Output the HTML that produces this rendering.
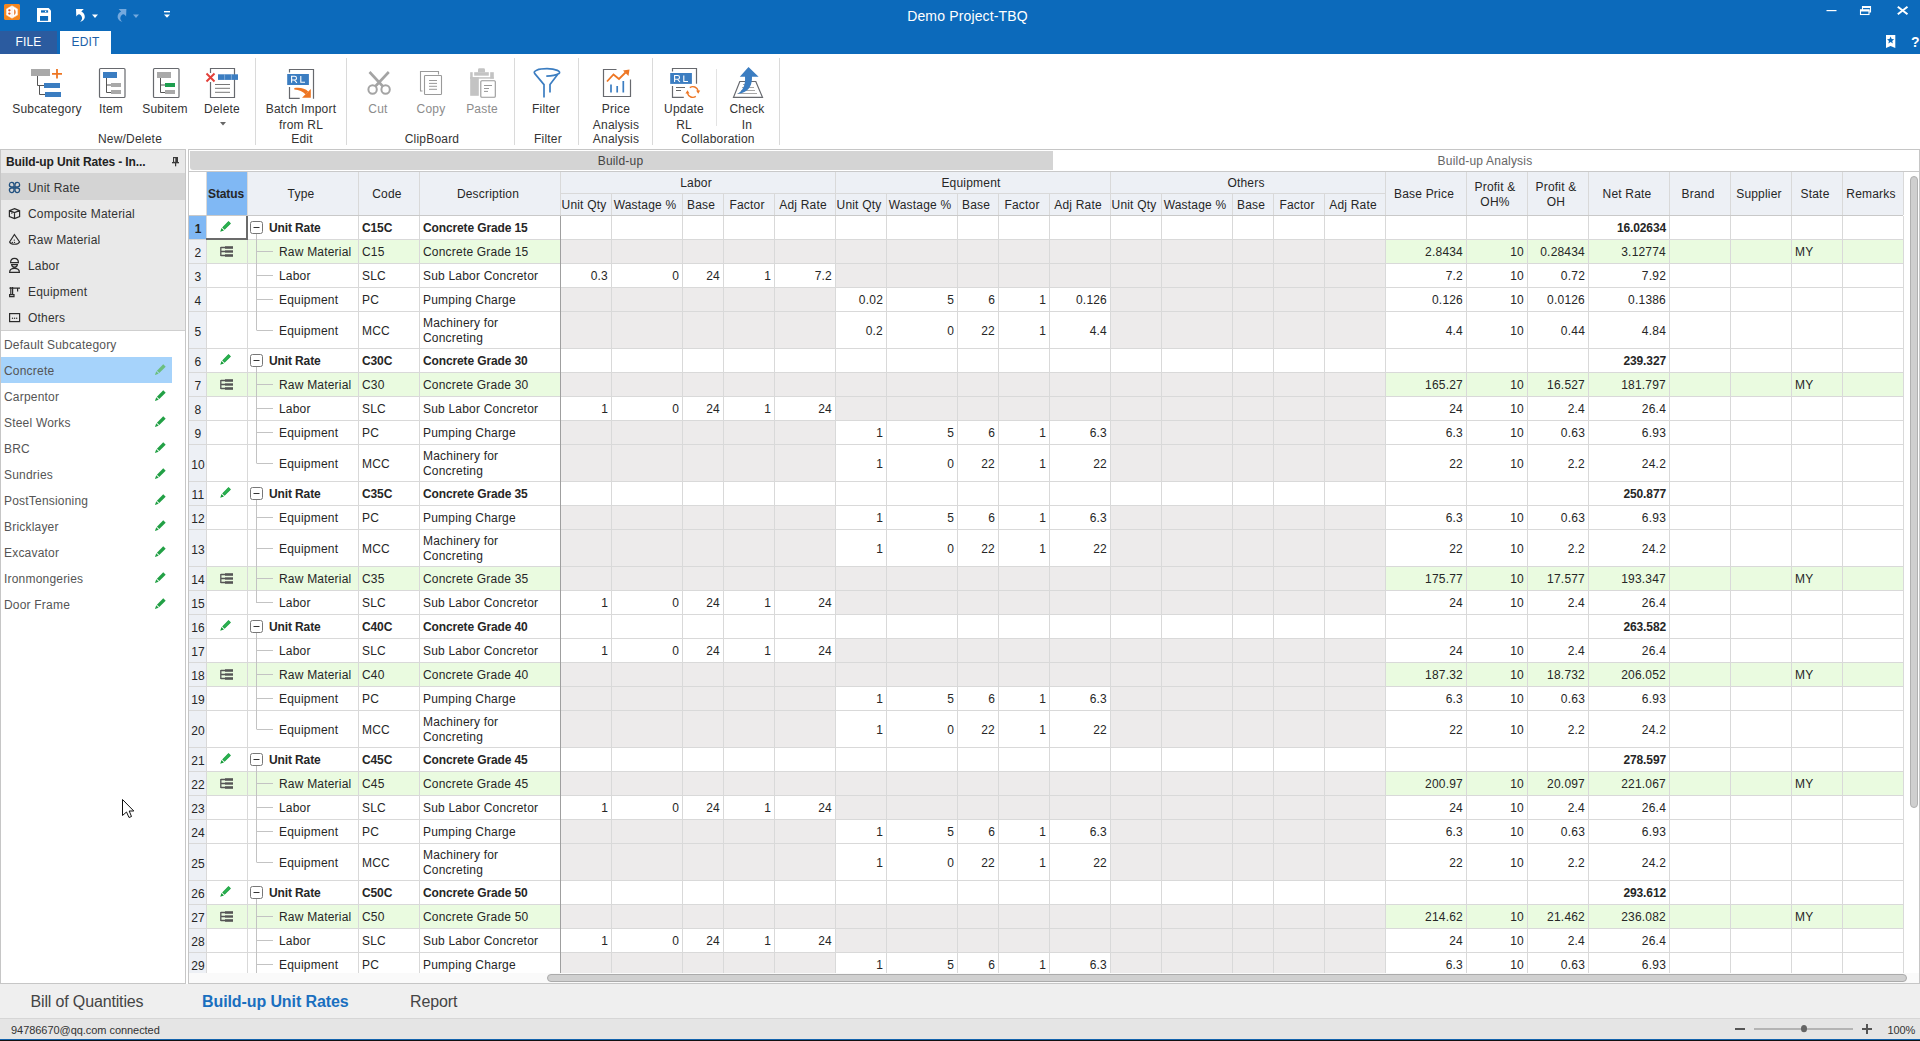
<!DOCTYPE html><html><head><meta charset="utf-8"><title>Demo Project-TBQ</title><style>
*{margin:0;padding:0;box-sizing:border-box}
html,body{width:1920px;height:1041px;overflow:hidden;background:#fff;font-family:"Liberation Sans",sans-serif;font-size:12px;color:#262626;letter-spacing:0.2px}
.a{position:absolute}
.t{position:absolute;white-space:nowrap;line-height:14px}
svg{position:absolute;overflow:visible}
.rl{position:absolute;white-space:nowrap;line-height:14px;text-align:center;color:#333;width:120px}
.rd{color:#8c8c8c}
.sep{position:absolute;width:1px;background:#dadada}
</style></head><body>
<div class="a" style="left:0;top:0;width:1920px;height:54px;background:#0c6abb"></div>
<div class="t" style="left:0;top:8px;width:1935px;text-align:center;color:#fff;font-size:14px;line-height:16px;letter-spacing:0.15px">Demo Project-TBQ</div>
<svg style="left:0;top:0" width="24" height="24"><path d="M5 4 H19 L20 5 V19 L19 20 H5 L4 19 V5 Z" fill="#f5861f"/><path d="M12 5.8 L17.6 9 V15 L12 18.2 L6.4 15 V9 Z" fill="#fff" stroke="#fde6cf" stroke-width="0.6"/><ellipse cx="9.4" cy="10.3" rx="1.2" ry="1.1" fill="#e8531a"/><ellipse cx="9.4" cy="13.6" rx="1.2" ry="1.1" fill="#e8531a"/><path d="M14.2 9.2 C16 10 16.2 14 14.2 14.9 Z" fill="#ea6f1c"/><path d="M12 6.5 V17.5" stroke="#fbe3d6" stroke-width="0.8"/></svg>
<svg style="left:0;top:0" width="60" height="30"><path d="M37 8.1 H48.6 L51 10.5 V21.9 H37 Z" fill="#fff"/><rect x="40" y="16" width="8.1" height="4.8" fill="#0c6abb"/><rect x="41" y="10.3" width="7.1" height="2.3" fill="#0c6abb"/><rect x="45" y="10.8" width="1.2" height="1.3" fill="#fff"/></svg>
<svg style="left:0;top:0" width="200" height="30"><path d="M76 9.1 H83.8 L81.3 11.6 C83.5 12.8 85 14.8 84.8 17.2 C84.6 19.5 82.5 21.2 80 21.7 C81.8 20.3 82.4 18.8 82 17.5 C81.6 15.6 80.3 14.3 79 14.2 C78 14.2 77 15.2 76.3 16.6 Z" fill="#fff"/><path d="M92 14.5 H98 L95 18 Z" fill="#fff"/><path transform="translate(202.4 0) scale(-1 1)" d="M76 9.1 H83.8 L81.3 11.6 C83.5 12.8 85 14.8 84.8 17.2 C84.6 19.5 82.5 21.2 80 21.7 C81.8 20.3 82.4 18.8 82 17.5 C81.6 15.6 80.3 14.3 79 14.2 C78 14.2 77 15.2 76.3 16.6 Z" fill="#74a9de"/><path d="M133 14.5 H139 L136 18 Z" fill="#74a9de"/><rect x="164" y="11" width="6" height="1.4" fill="#fff"/><path d="M164 14.5 H170 L167 17.8 Z" fill="#fff"/></svg>
<svg style="left:0;top:0" width="1920" height="60"><rect x="1826.5" y="10" width="10" height="1.2" fill="#fff"/><path d="M1862.5 11.5 V6.5 H1870.5 V12 H1869" fill="none" stroke="#fff" stroke-width="1.1"/><rect x="1862" y="6" width="9" height="2" fill="#fff"/><rect x="1860.5" y="10" width="8.5" height="4.5" fill="#0c6abb" stroke="#fff" stroke-width="1.1"/><rect x="1860" y="9.5" width="9.5" height="2" fill="#fff"/><path d="M1897.8 6.8 L1907.5 14.3 M1907.5 6.8 L1897.8 14.3" stroke="#fff" stroke-width="2"/><path d="M1886 35 H1895.3 V48 L1890.6 46 L1886 48 Z" fill="#fff"/><path d="M1890.6 36.6 L1891.7 39.1 L1894.2 39.3 L1892.2 40.9 L1892.9 43.4 L1890.6 42 L1888.3 43.4 L1889 40.9 L1887 39.3 L1889.5 39.1 Z" fill="#0c6abb"/></svg>
<div class="t" style="left:1911px;top:35px;color:#fff;font-weight:bold;font-size:14px">?</div>
<div class="a" style="left:0;top:31px;width:57px;height:23px;background:#2b5b9f"></div>
<div class="t" style="left:0;top:35px;width:57px;text-align:center;color:#fff;font-size:12px">FILE</div>
<div class="a" style="left:60px;top:31px;width:51px;height:24px;background:#fff"></div>
<div class="t" style="left:60px;top:35px;width:51px;text-align:center;color:#1d5fa8;font-size:12px">EDIT</div>
<div class="a" style="left:0;top:54px;width:1920px;height:95px;background:#fff"></div>
<div class="rl " style="left:-13px;top:102px">Subcategory</div>
<div class="rl " style="left:51px;top:102px">Item</div>
<div class="rl " style="left:105px;top:102px">Subitem</div>
<div class="rl " style="left:162px;top:102px">Delete</div>
<div class="rl " style="left:70px;top:132px">New/Delete</div>
<div class="rl " style="left:241px;top:102px">Batch Import</div>
<div class="rl " style="left:241px;top:118px">from RL</div>
<div class="rl " style="left:242px;top:132px">Edit</div>
<div class="rl rd" style="left:318px;top:102px">Cut</div>
<div class="rl rd" style="left:371px;top:102px">Copy</div>
<div class="rl rd" style="left:422px;top:102px">Paste</div>
<div class="rl " style="left:372px;top:132px">ClipBoard</div>
<div class="rl " style="left:486px;top:102px">Filter</div>
<div class="rl " style="left:488px;top:132px">Filter</div>
<div class="rl " style="left:556px;top:102px">Price</div>
<div class="rl " style="left:556px;top:118px">Analysis</div>
<div class="rl " style="left:556px;top:132px">Analysis</div>
<div class="rl " style="left:624px;top:102px">Update</div>
<div class="rl " style="left:624px;top:118px">RL</div>
<div class="rl " style="left:687px;top:102px">Check</div>
<div class="rl " style="left:687px;top:118px">In</div>
<div class="rl " style="left:658px;top:132px">Collaboration</div>
<div class="sep" style="left:255px;top:58px;height:87px"></div>
<div class="sep" style="left:346px;top:58px;height:87px"></div>
<div class="sep" style="left:514px;top:58px;height:87px"></div>
<div class="sep" style="left:578px;top:58px;height:87px"></div>
<div class="sep" style="left:652px;top:58px;height:87px"></div>
<div class="sep" style="left:779px;top:58px;height:87px"></div>
<div class="sep" style="left:716px;top:69px;height:57px;background:#e3e3e3"></div>
<svg style="left:0;top:0" width="800" height="150"><g fill="none" stroke-linecap="butt"><rect x="31" y="69" width="19" height="7" fill="#a9a9a9"/><path d="M52 73.8 H62 M57 69 V78.5" stroke="#ee7623" stroke-width="1.8"/><path d="M37.5 76 V85.5 H44 M39.5 85.5 V94.5 H45" stroke="#555" stroke-width="1"/><rect x="44" y="83" width="16" height="5" fill="#3b7dc1"/><rect x="45" y="92" width="16" height="5" fill="#3b7dc1"/><rect x="99.5" y="68.5" width="25.5" height="29" rx="1" stroke="#67696e" stroke-width="1.2"/><rect x="103" y="72" width="14" height="6" fill="#3b7dc1"/><path d="M106.5 78 V92.5 H111 M106.5 85 H111" stroke="#555" stroke-width="1"/><rect x="111" y="83" width="10" height="4" fill="#a9a9a9"/><rect x="111" y="90" width="10" height="4" fill="#a9a9a9"/><rect x="153.5" y="68.5" width="25.5" height="29" rx="1" stroke="#67696e" stroke-width="1.2"/><rect x="157" y="72" width="14" height="6" fill="#a9a9a9"/><path d="M160.5 78 V92.5 H165 M160.5 85 H165" stroke="#555" stroke-width="1"/><rect x="165" y="83" width="10" height="4" fill="#1e9e4f"/><rect x="165" y="90" width="10" height="4" fill="#a9a9a9"/><path d="M210.5 73 V68.5 H234.5 V97.5 H210.5 V82" stroke="#67696e" stroke-width="1.2"/><path d="M206.5 73.5 L214.5 81.5 M214.5 73.5 L206.5 81.5" stroke="#e2403a" stroke-width="2"/><rect x="218" y="74.3" width="20" height="5.6" fill="#3b7dc1"/><path d="M224.6 74.3 V79.9 M231.4 74.3 V79.9" stroke="#a9c6e6" stroke-width="0.6"/><path d="M215 84.5 H230 M215 88.3 H230 M215 92.3 H230" stroke="#777" stroke-width="1"/><path d="M220 122 H226 L223 125.5 Z" fill="#666"/><path d="M289.5 72.5 V69.5 H313.5 V98.8 M289.5 87 V98.4 H299.7" stroke="#67696e" stroke-width="1.2"/><rect x="287.2" y="74" width="21.7" height="11" fill="#3b7dc1"/><path d="M291.6 82.8 V76.3 H294.6 Q296.5 76.3 296.5 78.2 Q296.5 80 294.6 80 H291.6 M294.4 80 L296.9 82.8 M300.8 76.1 V82.3 H305" stroke="#fff" stroke-width="1.1"/><path d="M294.3 88.1 C300 87.2 305 88.3 308.2 91.6 L305.6 94.4 C303 91.4 299 89.9 294.3 89.4 Z" fill="#ee7623"/><path d="M302 97.8 L310.8 89 L310.8 97.8 Z" fill="#ee7623"/><circle cx="372.6" cy="89.5" r="4.2" stroke="#a4a4a4" stroke-width="2"/><circle cx="385.6" cy="89.5" r="4.2" stroke="#a4a4a4" stroke-width="2"/><path d="M369.5 72 L383 86.5 M388.8 72 L375.2 86.5" stroke="#a4a4a4" stroke-width="2.6"/><path d="M422.5 91 H420.5 V71.5 H438.5 V74.5" stroke="#9a9a9a" stroke-width="1.1"/><rect x="424.5" y="75.5" width="17" height="19" rx="0.8" stroke="#9a9a9a" stroke-width="1.1"/><path d="M429 80.5 H437 M429 83.4 H437 M429 86.3 H437 M429 89.3 H437" stroke="#9a9a9a" stroke-width="1"/><g fill="#c3c3c3"><rect x="470.2" y="77.2" width="8.6" height="18.6"/><rect x="470.2" y="72.2" width="2.5" height="6.5"/><rect x="490.2" y="72.2" width="3.6" height="6.5"/><rect x="470.2" y="77.2" width="23.6" height="1.5"/><rect x="474.2" y="72.2" width="14.6" height="3.5"/><path d="M478 72.3 V69.5 Q478 68.2 479.5 68.2 H483.5 Q485 68.2 485 69.5 V72.3 Z"/></g><rect x="480.8" y="80.8" width="14.5" height="16.5" rx="1" fill="#fff" stroke="#989898" stroke-width="1.1"/><path d="M484 85.5 H492 M484 88.5 H489 M484 91.4 H488" stroke="#989898" stroke-width="1"/><path d="M546.3 76.2 C551 76 556 75.2 559 73.5 C561.5 71.5 556 68.7 547 68.7 C538 68.7 532.5 71 534.8 73.6 L544 84.6 V97.5 M557.8 74.3 L550 84.6 V92.5" stroke="#3b7dc1" stroke-width="1.7"/><path d="M616.5 69.5 H603.5 V96.5 H630.5 V79.5" stroke="#67696e" stroke-width="1.2"/><path d="M611 84.5 V92.6 M617.2 86 V92.6 M623.3 81 V92.6" stroke="#3b7dc1" stroke-width="1.7"/><path d="M607 81.5 L613.5 74.5 L619 79 L625.5 72.5" stroke="#ee7623" stroke-width="1.8"/><path d="M623 70.5 L629.5 69.5 L628.5 76 Z" fill="#ee7623"/><path d="M672.5 71.6 V68.5 H696.5 V83.7 M672.5 86 V97.4 H683.8" stroke="#67696e" stroke-width="1.2"/><rect x="670.2" y="73" width="21.7" height="10.9" fill="#3b7dc1"/><path d="M674.6 82 V75.5 H677.6 Q679.5 75.5 679.5 77.4 Q679.5 79.2 677.6 79.2 H674.6 M677.4 79.2 L679.9 82 M683.8 75.4 V81.5 H688" stroke="#fff" stroke-width="1.1"/><path d="M676 87.5 H685 M676 90.5 H681" stroke="#666" stroke-width="1"/><path d="M689.8 87.6 A5.5 5.5 0 0 1 698.2 90.8 M695.8 96.4 A5.5 5.5 0 0 1 687.4 93.2" stroke="#ee7623" stroke-width="1.4"/><path d="M696.1 90.4 L700.2 90.4 L698.2 93.8 Z M685.4 93.6 L689.5 93.6 L687.5 90.2 Z" fill="#ee7623"/><path d="M739.8 81.5 H755.8 L762.5 97.3 H733.5 Z" stroke="#67696e" stroke-width="1.2"/><path d="M743 84.5 H751 M742 87.5 H754 M741 90.5 H755 M737.5 93.5 H757" stroke="#9d9d9d" stroke-width="0.9"/><path d="M748.5 67 L758.6 76.8 H752 C752.3 86 748 93 737.8 93.8 C743.5 90.5 745.5 84 745 76.8 H739.8 Z" fill="#3b7dc1"/></g></svg>
<div class="a" style="left:0;top:149px;width:186px;height:835px;border:1px solid #c6c6c6;background:#fff"></div>
<div class="a" style="left:188px;top:149px;width:1732px;height:835px;border:1px solid #c6c6c6;border-right:none;background:#fff"></div>
<div class="a" style="left:186px;top:149px;width:2px;height:835px;background:#fff"></div>
<div class="a" style="left:1px;top:150px;width:184px;height:23px;background:#e9e9e9"></div>
<div class="t" style="left:6px;top:155px;font-weight:bold;letter-spacing:-0.12px;color:#222">Build-up Unit Rates - In...</div>
<svg style="left:0;top:0" width="186" height="180"><g fill="#3a3a3a"><rect x="173" y="157" width="5" height="5.3"/><rect x="172" y="162" width="7" height="1.3"/><rect x="175" y="163" width="1.2" height="3.3"/></g><rect x="174.1" y="158.2" width="1.2" height="3.6" fill="#f4f4f4"/></svg>
<div class="a" style="left:1px;top:173px;width:184px;height:157px;background:#e9e9e9"></div>
<div class="a" style="left:1px;top:173px;width:184px;height:27px;background:#d4d4d4"></div>
<div class="a" style="left:1px;top:330px;width:184px;height:1px;background:#cfcfcf"></div>
<div class="t" style="left:28px;top:181px;color:#333">Unit Rate</div>
<div class="t" style="left:28px;top:207px;color:#333">Composite Material</div>
<div class="t" style="left:28px;top:233px;color:#333">Raw Material</div>
<div class="t" style="left:28px;top:259px;color:#333">Labor</div>
<div class="t" style="left:28px;top:285px;color:#333">Equipment</div>
<div class="t" style="left:28px;top:311px;color:#333">Others</div>
<svg style="left:0;top:0" width="30" height="340"><g fill="none" stroke="#2b2b2b" stroke-width="1.2"><g stroke="#1f4f7e" stroke-width="1.3"><path d="M14 187 H11.3 A2.3 2.3 0 1 1 14 184.7 Z"/><path d="M15 187 H17.7 A2.3 2.3 0 1 0 15 184.7 Z"/><path d="M14 188 H11.3 A2.3 2.3 0 1 0 14 190.3 Z"/><path d="M15 188 H17.7 A2.3 2.3 0 1 1 15 190.3 Z"/></g><path d="M14.5 208.6 L19.6 210.6 V216.6 L14.5 218.6 L9.4 216.6 V210.6 Z M9.4 210.6 L14.5 212.6 L19.6 210.6 M14.5 212.6 V218.6 M11.2 213.2 H12.4"/><path d="M14.4 234.5 L9.6 242 C11 245 18 245 19.6 242 Z"/><g fill="#2b2b2b" stroke="none"><circle cx="14.3" cy="240.1" r="0.7"/><circle cx="12.3" cy="242.4" r="0.7"/><circle cx="14.5" cy="242.4" r="0.7"/></g><path d="M10.6 262.6 C10.6 257 18.4 257 18.4 262.6 Z M11.6 264.6 H17.4 C17 268 12 268 11.6 264.6 Z M9.6 272.4 C9.6 267 19.4 267 19.4 272.4 Z"/><path d="M10.8 287 V294.6 M12.6 287 V294.6 M9.6 294.6 H14 V296.6 H9.6 Z M9.4 288.2 H20 M17.6 288.2 V291.6" /><rect x="9.6" y="313.6" width="10" height="8"/><g fill="#2b2b2b" stroke="none"><circle cx="12.5" cy="318.3" r="0.7"/><circle cx="14.6" cy="318.3" r="0.7"/><circle cx="16.7" cy="318.3" r="0.7"/></g></g></svg>
<div class="t" style="left:4px;top:338px;color:#555">Default Subcategory</div>
<div class="a" style="left:1px;top:357px;width:171px;height:26px;background:#a6d3fb"></div>
<div class="t" style="left:4px;top:364px;color:#555">Concrete</div>
<div class="t" style="left:4px;top:390px;color:#555">Carpentor</div>
<div class="t" style="left:4px;top:416px;color:#555">Steel Works</div>
<div class="t" style="left:4px;top:442px;color:#555">BRC</div>
<div class="t" style="left:4px;top:468px;color:#555">Sundries</div>
<div class="t" style="left:4px;top:494px;color:#555">PostTensioning</div>
<div class="t" style="left:4px;top:520px;color:#555">Bricklayer</div>
<div class="t" style="left:4px;top:546px;color:#555">Excavator</div>
<div class="t" style="left:4px;top:572px;color:#555">Ironmongeries</div>
<div class="t" style="left:4px;top:598px;color:#555">Door Frame</div>
<svg style="left:0;top:0" width="186" height="620"><g transform="translate(160.5 369.5) rotate(-45)"><rect x="-3.4" y="-1.7" width="9" height="3.4" fill="#6bbf7e"/><path d="M-4.3 -1.7 L-7.9 0 L-4.3 1.7 Z" fill="#6bbf7e"/></g><g transform="translate(160.5 395.5) rotate(-45)"><rect x="-3.4" y="-1.7" width="9" height="3.4" fill="#22a045"/><path d="M-4.3 -1.7 L-7.9 0 L-4.3 1.7 Z" fill="#22a045"/></g><g transform="translate(160.5 421.5) rotate(-45)"><rect x="-3.4" y="-1.7" width="9" height="3.4" fill="#22a045"/><path d="M-4.3 -1.7 L-7.9 0 L-4.3 1.7 Z" fill="#22a045"/></g><g transform="translate(160.5 447.5) rotate(-45)"><rect x="-3.4" y="-1.7" width="9" height="3.4" fill="#22a045"/><path d="M-4.3 -1.7 L-7.9 0 L-4.3 1.7 Z" fill="#22a045"/></g><g transform="translate(160.5 473.5) rotate(-45)"><rect x="-3.4" y="-1.7" width="9" height="3.4" fill="#22a045"/><path d="M-4.3 -1.7 L-7.9 0 L-4.3 1.7 Z" fill="#22a045"/></g><g transform="translate(160.5 499.5) rotate(-45)"><rect x="-3.4" y="-1.7" width="9" height="3.4" fill="#22a045"/><path d="M-4.3 -1.7 L-7.9 0 L-4.3 1.7 Z" fill="#22a045"/></g><g transform="translate(160.5 525.5) rotate(-45)"><rect x="-3.4" y="-1.7" width="9" height="3.4" fill="#22a045"/><path d="M-4.3 -1.7 L-7.9 0 L-4.3 1.7 Z" fill="#22a045"/></g><g transform="translate(160.5 551.5) rotate(-45)"><rect x="-3.4" y="-1.7" width="9" height="3.4" fill="#22a045"/><path d="M-4.3 -1.7 L-7.9 0 L-4.3 1.7 Z" fill="#22a045"/></g><g transform="translate(160.5 577.5) rotate(-45)"><rect x="-3.4" y="-1.7" width="9" height="3.4" fill="#22a045"/><path d="M-4.3 -1.7 L-7.9 0 L-4.3 1.7 Z" fill="#22a045"/></g><g transform="translate(160.5 603.5) rotate(-45)"><rect x="-3.4" y="-1.7" width="9" height="3.4" fill="#22a045"/><path d="M-4.3 -1.7 L-7.9 0 L-4.3 1.7 Z" fill="#22a045"/></g></svg>
<div class="a" style="left:190px;top:151px;width:863px;height:19px;background:#d4d4d4;border-radius:0 0 0 3px"></div>
<div class="t" style="left:189px;top:154px;width:863px;text-align:center;color:#444">Build-up</div>
<div class="t" style="left:1052px;top:154px;width:866px;text-align:center;color:#666">Build-up Analysis</div>
<div class="a" style="left:189px;top:171px;width:1730px;height:1px;background:#c9c9c9"></div>
<div class="a" style="left:189px;top:172px;width:17px;height:43px;background:#fff"></div>
<div class="a" style="left:207px;top:172px;width:40px;height:43px;background:#80b8f4"></div>
<div class="t" style="left:206px;top:186.5px;width:40px;text-align:center;font-weight:bold;letter-spacing:-0.12px">Status</div>
<div class="a" style="left:247px;top:172px;width:1px;height:43px;background:#80b8f4"></div>
<div class="a" style="left:248px;top:172px;width:110px;height:43px;background:#edf0f5"></div>
<div class="t" style="left:246px;top:186.5px;width:110px;text-align:center">Type</div>
<div class="a" style="left:359px;top:172px;width:60px;height:43px;background:#edf0f5"></div>
<div class="t" style="left:357px;top:186.5px;width:60px;text-align:center">Code</div>
<div class="a" style="left:420px;top:172px;width:140px;height:43px;background:#edf0f5"></div>
<div class="t" style="left:418px;top:186.5px;width:140px;text-align:center">Description</div>
<div class="a" style="left:561px;top:172px;width:274px;height:21px;background:#edf0f5"></div>
<div class="t" style="left:559px;top:176px;width:274px;text-align:center">Labor</div>
<div class="a" style="left:561px;top:193px;width:275px;height:1px;background:#d9d9d9"></div>
<div class="a" style="left:561px;top:194px;width:50px;height:21px;background:#edf0f5"></div>
<div class="t" style="left:559px;top:197.5px;width:50px;text-align:center">Unit Qty</div>
<div class="a" style="left:611px;top:194px;width:1px;height:21px;background:#d9d9d9"></div>
<div class="a" style="left:612px;top:194px;width:70px;height:21px;background:#edf0f5"></div>
<div class="t" style="left:610px;top:197.5px;width:70px;text-align:center">Wastage %</div>
<div class="a" style="left:682px;top:194px;width:1px;height:21px;background:#d9d9d9"></div>
<div class="a" style="left:683px;top:194px;width:40px;height:21px;background:#edf0f5"></div>
<div class="t" style="left:681px;top:197.5px;width:40px;text-align:center">Base</div>
<div class="a" style="left:723px;top:194px;width:1px;height:21px;background:#d9d9d9"></div>
<div class="a" style="left:724px;top:194px;width:50px;height:21px;background:#edf0f5"></div>
<div class="t" style="left:722px;top:197.5px;width:50px;text-align:center">Factor</div>
<div class="a" style="left:774px;top:194px;width:1px;height:21px;background:#d9d9d9"></div>
<div class="a" style="left:775px;top:194px;width:60px;height:21px;background:#edf0f5"></div>
<div class="t" style="left:773px;top:197.5px;width:60px;text-align:center">Adj Rate</div>
<div class="a" style="left:835px;top:194px;width:1px;height:21px;background:#d9d9d9"></div>
<div class="a" style="left:835px;top:172px;width:1px;height:21px;background:#d9d9d9"></div>
<div class="a" style="left:836px;top:172px;width:274px;height:21px;background:#edf0f5"></div>
<div class="t" style="left:834px;top:176px;width:274px;text-align:center">Equipment</div>
<div class="a" style="left:836px;top:193px;width:275px;height:1px;background:#d9d9d9"></div>
<div class="a" style="left:836px;top:194px;width:50px;height:21px;background:#edf0f5"></div>
<div class="t" style="left:834px;top:197.5px;width:50px;text-align:center">Unit Qty</div>
<div class="a" style="left:886px;top:194px;width:1px;height:21px;background:#d9d9d9"></div>
<div class="a" style="left:887px;top:194px;width:70px;height:21px;background:#edf0f5"></div>
<div class="t" style="left:885px;top:197.5px;width:70px;text-align:center">Wastage %</div>
<div class="a" style="left:957px;top:194px;width:1px;height:21px;background:#d9d9d9"></div>
<div class="a" style="left:958px;top:194px;width:40px;height:21px;background:#edf0f5"></div>
<div class="t" style="left:956px;top:197.5px;width:40px;text-align:center">Base</div>
<div class="a" style="left:998px;top:194px;width:1px;height:21px;background:#d9d9d9"></div>
<div class="a" style="left:999px;top:194px;width:50px;height:21px;background:#edf0f5"></div>
<div class="t" style="left:997px;top:197.5px;width:50px;text-align:center">Factor</div>
<div class="a" style="left:1049px;top:194px;width:1px;height:21px;background:#d9d9d9"></div>
<div class="a" style="left:1050px;top:194px;width:60px;height:21px;background:#edf0f5"></div>
<div class="t" style="left:1048px;top:197.5px;width:60px;text-align:center">Adj Rate</div>
<div class="a" style="left:1110px;top:194px;width:1px;height:21px;background:#d9d9d9"></div>
<div class="a" style="left:1110px;top:172px;width:1px;height:21px;background:#d9d9d9"></div>
<div class="a" style="left:1111px;top:172px;width:274px;height:21px;background:#edf0f5"></div>
<div class="t" style="left:1109px;top:176px;width:274px;text-align:center">Others</div>
<div class="a" style="left:1111px;top:193px;width:275px;height:1px;background:#d9d9d9"></div>
<div class="a" style="left:1111px;top:194px;width:50px;height:21px;background:#edf0f5"></div>
<div class="t" style="left:1109px;top:197.5px;width:50px;text-align:center">Unit Qty</div>
<div class="a" style="left:1161px;top:194px;width:1px;height:21px;background:#d9d9d9"></div>
<div class="a" style="left:1162px;top:194px;width:70px;height:21px;background:#edf0f5"></div>
<div class="t" style="left:1160px;top:197.5px;width:70px;text-align:center">Wastage %</div>
<div class="a" style="left:1232px;top:194px;width:1px;height:21px;background:#d9d9d9"></div>
<div class="a" style="left:1233px;top:194px;width:40px;height:21px;background:#edf0f5"></div>
<div class="t" style="left:1231px;top:197.5px;width:40px;text-align:center">Base</div>
<div class="a" style="left:1273px;top:194px;width:1px;height:21px;background:#d9d9d9"></div>
<div class="a" style="left:1274px;top:194px;width:50px;height:21px;background:#edf0f5"></div>
<div class="t" style="left:1272px;top:197.5px;width:50px;text-align:center">Factor</div>
<div class="a" style="left:1324px;top:194px;width:1px;height:21px;background:#d9d9d9"></div>
<div class="a" style="left:1325px;top:194px;width:60px;height:21px;background:#edf0f5"></div>
<div class="t" style="left:1323px;top:197.5px;width:60px;text-align:center">Adj Rate</div>
<div class="a" style="left:1385px;top:194px;width:1px;height:21px;background:#d9d9d9"></div>
<div class="a" style="left:1385px;top:172px;width:1px;height:21px;background:#d9d9d9"></div>
<div class="a" style="left:1386px;top:172px;width:80px;height:43px;background:#edf0f5"></div>
<div class="t" style="left:1384px;top:186.5px;width:80px;text-align:center">Base Price</div>
<div class="a" style="left:1467px;top:172px;width:60px;height:43px;background:#edf0f5"></div>
<div class="t" style="left:1465px;top:179.5px;width:60px;text-align:center;line-height:15px">Profit &amp;<br>OH%</div>
<div class="a" style="left:1528px;top:172px;width:60px;height:43px;background:#edf0f5"></div>
<div class="t" style="left:1526px;top:179.5px;width:60px;text-align:center;line-height:15px">Profit &amp;<br>OH</div>
<div class="a" style="left:1589px;top:172px;width:80px;height:43px;background:#edf0f5"></div>
<div class="t" style="left:1587px;top:186.5px;width:80px;text-align:center">Net Rate</div>
<div class="a" style="left:1670px;top:172px;width:60px;height:43px;background:#edf0f5"></div>
<div class="t" style="left:1668px;top:186.5px;width:60px;text-align:center">Brand</div>
<div class="a" style="left:1731px;top:172px;width:60px;height:43px;background:#edf0f5"></div>
<div class="t" style="left:1729px;top:186.5px;width:60px;text-align:center">Supplier</div>
<div class="a" style="left:1792px;top:172px;width:50px;height:43px;background:#edf0f5"></div>
<div class="t" style="left:1790px;top:186.5px;width:50px;text-align:center">State</div>
<div class="a" style="left:1843px;top:172px;width:60px;height:43px;background:#edf0f5"></div>
<div class="t" style="left:1841px;top:186.5px;width:60px;text-align:center">Remarks</div>
<div class="a" style="left:206px;top:172px;width:1px;height:43px;background:#d9d9d9"></div>
<div class="a" style="left:247px;top:172px;width:1px;height:43px;background:#d9d9d9"></div>
<div class="a" style="left:358px;top:172px;width:1px;height:43px;background:#d9d9d9"></div>
<div class="a" style="left:419px;top:172px;width:1px;height:43px;background:#d9d9d9"></div>
<div class="a" style="left:560px;top:172px;width:1px;height:43px;background:#d9d9d9"></div>
<div class="a" style="left:1466px;top:172px;width:1px;height:43px;background:#d9d9d9"></div>
<div class="a" style="left:1527px;top:172px;width:1px;height:43px;background:#d9d9d9"></div>
<div class="a" style="left:1588px;top:172px;width:1px;height:43px;background:#d9d9d9"></div>
<div class="a" style="left:1669px;top:172px;width:1px;height:43px;background:#d9d9d9"></div>
<div class="a" style="left:1730px;top:172px;width:1px;height:43px;background:#d9d9d9"></div>
<div class="a" style="left:1791px;top:172px;width:1px;height:43px;background:#d9d9d9"></div>
<div class="a" style="left:1842px;top:172px;width:1px;height:43px;background:#d9d9d9"></div>
<div class="a" style="left:1903px;top:172px;width:1px;height:43px;background:#d9d9d9"></div>
<div class="a" style="left:189px;top:215px;width:1714px;height:1px;background:#c9c9c9"></div>
<div class="a" style="left:0;top:216px;width:1904px;height:757px;overflow:hidden">
<div class="a" style="left:189px;top:0px;width:17px;height:23px;background:#80b8f4"></div>
<div class="t" style="left:189px;top:6px;width:18px;text-align:center;font-weight:bold;letter-spacing:-0.12px">1</div>
<div class="a" style="left:207px;top:0px;width:40px;height:23px;background:#fff"></div>
<div class="a" style="left:248px;top:0px;width:110px;height:23px;background:#fff"></div>
<div class="a" style="left:359px;top:0px;width:60px;height:23px;background:#fff"></div><div class="t" style="left:362px;top:5px;color:#262626;font-weight:bold;letter-spacing:-0.12px">C15C</div>
<div class="a" style="left:420px;top:0px;width:140px;height:23px;background:#fff"></div><div class="t" style="left:423px;top:5px;color:#262626;font-weight:bold;letter-spacing:-0.12px">Concrete Grade 15</div>
<div class="a" style="left:561px;top:0px;width:50px;height:23px;background:#fff"></div>
<div class="a" style="left:612px;top:0px;width:70px;height:23px;background:#fff"></div>
<div class="a" style="left:683px;top:0px;width:40px;height:23px;background:#fff"></div>
<div class="a" style="left:724px;top:0px;width:50px;height:23px;background:#fff"></div>
<div class="a" style="left:775px;top:0px;width:60px;height:23px;background:#fff"></div>
<div class="a" style="left:836px;top:0px;width:50px;height:23px;background:#fff"></div>
<div class="a" style="left:887px;top:0px;width:70px;height:23px;background:#fff"></div>
<div class="a" style="left:958px;top:0px;width:40px;height:23px;background:#fff"></div>
<div class="a" style="left:999px;top:0px;width:50px;height:23px;background:#fff"></div>
<div class="a" style="left:1050px;top:0px;width:60px;height:23px;background:#fff"></div>
<div class="a" style="left:1111px;top:0px;width:50px;height:23px;background:#fff"></div>
<div class="a" style="left:1162px;top:0px;width:70px;height:23px;background:#fff"></div>
<div class="a" style="left:1233px;top:0px;width:40px;height:23px;background:#fff"></div>
<div class="a" style="left:1274px;top:0px;width:50px;height:23px;background:#fff"></div>
<div class="a" style="left:1325px;top:0px;width:60px;height:23px;background:#fff"></div>
<div class="a" style="left:1386px;top:0px;width:80px;height:23px;background:#fff"></div>
<div class="a" style="left:1467px;top:0px;width:60px;height:23px;background:#fff"></div>
<div class="a" style="left:1528px;top:0px;width:60px;height:23px;background:#fff"></div>
<div class="a" style="left:1589px;top:0px;width:80px;height:23px;background:#fff"></div><div class="t" style="left:1589px;width:77px;text-align:right;top:5px;color:#262626;font-weight:bold;letter-spacing:-0.12px">16.02634</div>
<div class="a" style="left:1670px;top:0px;width:60px;height:23px;background:#fff"></div>
<div class="a" style="left:1731px;top:0px;width:60px;height:23px;background:#fff"></div>
<div class="a" style="left:1792px;top:0px;width:50px;height:23px;background:#fff"></div>
<div class="a" style="left:1843px;top:0px;width:60px;height:23px;background:#fff"></div>
<div class="a" style="left:189px;top:24px;width:17px;height:23px;background:#edf0f5"></div>
<div class="t" style="left:189px;top:30px;width:18px;text-align:center">2</div>
<div class="a" style="left:207px;top:24px;width:40px;height:23px;background:#eafbe0"></div>
<div class="a" style="left:248px;top:24px;width:110px;height:23px;background:#eafbe0"></div>
<div class="a" style="left:359px;top:24px;width:60px;height:23px;background:#eafbe0"></div><div class="t" style="left:362px;top:29px;color:#262626">C15</div>
<div class="a" style="left:420px;top:24px;width:140px;height:23px;background:#eafbe0"></div><div class="t" style="left:423px;top:29px;color:#262626">Concrete Grade 15</div>
<div class="a" style="left:561px;top:24px;width:50px;height:23px;background:#edebeb"></div>
<div class="a" style="left:612px;top:24px;width:70px;height:23px;background:#edebeb"></div>
<div class="a" style="left:683px;top:24px;width:40px;height:23px;background:#edebeb"></div>
<div class="a" style="left:724px;top:24px;width:50px;height:23px;background:#edebeb"></div>
<div class="a" style="left:775px;top:24px;width:60px;height:23px;background:#edebeb"></div>
<div class="a" style="left:836px;top:24px;width:50px;height:23px;background:#edebeb"></div>
<div class="a" style="left:887px;top:24px;width:70px;height:23px;background:#edebeb"></div>
<div class="a" style="left:958px;top:24px;width:40px;height:23px;background:#edebeb"></div>
<div class="a" style="left:999px;top:24px;width:50px;height:23px;background:#edebeb"></div>
<div class="a" style="left:1050px;top:24px;width:60px;height:23px;background:#edebeb"></div>
<div class="a" style="left:1111px;top:24px;width:50px;height:23px;background:#edebeb"></div>
<div class="a" style="left:1162px;top:24px;width:70px;height:23px;background:#edebeb"></div>
<div class="a" style="left:1233px;top:24px;width:40px;height:23px;background:#edebeb"></div>
<div class="a" style="left:1274px;top:24px;width:50px;height:23px;background:#edebeb"></div>
<div class="a" style="left:1325px;top:24px;width:60px;height:23px;background:#edebeb"></div>
<div class="a" style="left:1386px;top:24px;width:80px;height:23px;background:#eafbe0"></div><div class="t" style="left:1386px;width:77px;text-align:right;top:29px;color:#262626">2.8434</div>
<div class="a" style="left:1467px;top:24px;width:60px;height:23px;background:#eafbe0"></div><div class="t" style="left:1467px;width:57px;text-align:right;top:29px;color:#262626">10</div>
<div class="a" style="left:1528px;top:24px;width:60px;height:23px;background:#eafbe0"></div><div class="t" style="left:1528px;width:57px;text-align:right;top:29px;color:#262626">0.28434</div>
<div class="a" style="left:1589px;top:24px;width:80px;height:23px;background:#eafbe0"></div><div class="t" style="left:1589px;width:77px;text-align:right;top:29px;color:#262626">3.12774</div>
<div class="a" style="left:1670px;top:24px;width:60px;height:23px;background:#eafbe0"></div>
<div class="a" style="left:1731px;top:24px;width:60px;height:23px;background:#eafbe0"></div>
<div class="a" style="left:1792px;top:24px;width:50px;height:23px;background:#eafbe0"></div><div class="t" style="left:1795px;top:29px;color:#262626">MY</div>
<div class="a" style="left:1843px;top:24px;width:60px;height:23px;background:#eafbe0"></div>
<div class="a" style="left:189px;top:48px;width:17px;height:23px;background:#edf0f5"></div>
<div class="t" style="left:189px;top:54px;width:18px;text-align:center">3</div>
<div class="a" style="left:207px;top:48px;width:40px;height:23px;background:#fff"></div>
<div class="a" style="left:248px;top:48px;width:110px;height:23px;background:#fff"></div>
<div class="a" style="left:359px;top:48px;width:60px;height:23px;background:#fff"></div><div class="t" style="left:362px;top:53px;color:#262626">SLC</div>
<div class="a" style="left:420px;top:48px;width:140px;height:23px;background:#fff"></div><div class="t" style="left:423px;top:53px;color:#262626">Sub Labor Concretor</div>
<div class="a" style="left:561px;top:48px;width:50px;height:23px;background:#fff"></div><div class="t" style="left:561px;width:47px;text-align:right;top:53px;color:#262626">0.3</div>
<div class="a" style="left:612px;top:48px;width:70px;height:23px;background:#fff"></div><div class="t" style="left:612px;width:67px;text-align:right;top:53px;color:#262626">0</div>
<div class="a" style="left:683px;top:48px;width:40px;height:23px;background:#fff"></div><div class="t" style="left:683px;width:37px;text-align:right;top:53px;color:#262626">24</div>
<div class="a" style="left:724px;top:48px;width:50px;height:23px;background:#fff"></div><div class="t" style="left:724px;width:47px;text-align:right;top:53px;color:#262626">1</div>
<div class="a" style="left:775px;top:48px;width:60px;height:23px;background:#fff"></div><div class="t" style="left:775px;width:57px;text-align:right;top:53px;color:#262626">7.2</div>
<div class="a" style="left:836px;top:48px;width:50px;height:23px;background:#edebeb"></div>
<div class="a" style="left:887px;top:48px;width:70px;height:23px;background:#edebeb"></div>
<div class="a" style="left:958px;top:48px;width:40px;height:23px;background:#edebeb"></div>
<div class="a" style="left:999px;top:48px;width:50px;height:23px;background:#edebeb"></div>
<div class="a" style="left:1050px;top:48px;width:60px;height:23px;background:#edebeb"></div>
<div class="a" style="left:1111px;top:48px;width:50px;height:23px;background:#edebeb"></div>
<div class="a" style="left:1162px;top:48px;width:70px;height:23px;background:#edebeb"></div>
<div class="a" style="left:1233px;top:48px;width:40px;height:23px;background:#edebeb"></div>
<div class="a" style="left:1274px;top:48px;width:50px;height:23px;background:#edebeb"></div>
<div class="a" style="left:1325px;top:48px;width:60px;height:23px;background:#edebeb"></div>
<div class="a" style="left:1386px;top:48px;width:80px;height:23px;background:#fff"></div><div class="t" style="left:1386px;width:77px;text-align:right;top:53px;color:#262626">7.2</div>
<div class="a" style="left:1467px;top:48px;width:60px;height:23px;background:#fff"></div><div class="t" style="left:1467px;width:57px;text-align:right;top:53px;color:#262626">10</div>
<div class="a" style="left:1528px;top:48px;width:60px;height:23px;background:#fff"></div><div class="t" style="left:1528px;width:57px;text-align:right;top:53px;color:#262626">0.72</div>
<div class="a" style="left:1589px;top:48px;width:80px;height:23px;background:#fff"></div><div class="t" style="left:1589px;width:77px;text-align:right;top:53px;color:#262626">7.92</div>
<div class="a" style="left:1670px;top:48px;width:60px;height:23px;background:#fff"></div>
<div class="a" style="left:1731px;top:48px;width:60px;height:23px;background:#fff"></div>
<div class="a" style="left:1792px;top:48px;width:50px;height:23px;background:#fff"></div>
<div class="a" style="left:1843px;top:48px;width:60px;height:23px;background:#fff"></div>
<div class="a" style="left:189px;top:72px;width:17px;height:23px;background:#edf0f5"></div>
<div class="t" style="left:189px;top:78px;width:18px;text-align:center">4</div>
<div class="a" style="left:207px;top:72px;width:40px;height:23px;background:#fff"></div>
<div class="a" style="left:248px;top:72px;width:110px;height:23px;background:#fff"></div>
<div class="a" style="left:359px;top:72px;width:60px;height:23px;background:#fff"></div><div class="t" style="left:362px;top:77px;color:#262626">PC</div>
<div class="a" style="left:420px;top:72px;width:140px;height:23px;background:#fff"></div><div class="t" style="left:423px;top:77px;color:#262626">Pumping Charge</div>
<div class="a" style="left:561px;top:72px;width:50px;height:23px;background:#edebeb"></div>
<div class="a" style="left:612px;top:72px;width:70px;height:23px;background:#edebeb"></div>
<div class="a" style="left:683px;top:72px;width:40px;height:23px;background:#edebeb"></div>
<div class="a" style="left:724px;top:72px;width:50px;height:23px;background:#edebeb"></div>
<div class="a" style="left:775px;top:72px;width:60px;height:23px;background:#edebeb"></div>
<div class="a" style="left:836px;top:72px;width:50px;height:23px;background:#fff"></div><div class="t" style="left:836px;width:47px;text-align:right;top:77px;color:#262626">0.02</div>
<div class="a" style="left:887px;top:72px;width:70px;height:23px;background:#fff"></div><div class="t" style="left:887px;width:67px;text-align:right;top:77px;color:#262626">5</div>
<div class="a" style="left:958px;top:72px;width:40px;height:23px;background:#fff"></div><div class="t" style="left:958px;width:37px;text-align:right;top:77px;color:#262626">6</div>
<div class="a" style="left:999px;top:72px;width:50px;height:23px;background:#fff"></div><div class="t" style="left:999px;width:47px;text-align:right;top:77px;color:#262626">1</div>
<div class="a" style="left:1050px;top:72px;width:60px;height:23px;background:#fff"></div><div class="t" style="left:1050px;width:57px;text-align:right;top:77px;color:#262626">0.126</div>
<div class="a" style="left:1111px;top:72px;width:50px;height:23px;background:#edebeb"></div>
<div class="a" style="left:1162px;top:72px;width:70px;height:23px;background:#edebeb"></div>
<div class="a" style="left:1233px;top:72px;width:40px;height:23px;background:#edebeb"></div>
<div class="a" style="left:1274px;top:72px;width:50px;height:23px;background:#edebeb"></div>
<div class="a" style="left:1325px;top:72px;width:60px;height:23px;background:#edebeb"></div>
<div class="a" style="left:1386px;top:72px;width:80px;height:23px;background:#fff"></div><div class="t" style="left:1386px;width:77px;text-align:right;top:77px;color:#262626">0.126</div>
<div class="a" style="left:1467px;top:72px;width:60px;height:23px;background:#fff"></div><div class="t" style="left:1467px;width:57px;text-align:right;top:77px;color:#262626">10</div>
<div class="a" style="left:1528px;top:72px;width:60px;height:23px;background:#fff"></div><div class="t" style="left:1528px;width:57px;text-align:right;top:77px;color:#262626">0.0126</div>
<div class="a" style="left:1589px;top:72px;width:80px;height:23px;background:#fff"></div><div class="t" style="left:1589px;width:77px;text-align:right;top:77px;color:#262626">0.1386</div>
<div class="a" style="left:1670px;top:72px;width:60px;height:23px;background:#fff"></div>
<div class="a" style="left:1731px;top:72px;width:60px;height:23px;background:#fff"></div>
<div class="a" style="left:1792px;top:72px;width:50px;height:23px;background:#fff"></div>
<div class="a" style="left:1843px;top:72px;width:60px;height:23px;background:#fff"></div>
<div class="a" style="left:189px;top:96px;width:17px;height:36px;background:#edf0f5"></div>
<div class="t" style="left:189px;top:108.5px;width:18px;text-align:center">5</div>
<div class="a" style="left:207px;top:96px;width:40px;height:36px;background:#fff"></div>
<div class="a" style="left:248px;top:96px;width:110px;height:36px;background:#fff"></div>
<div class="a" style="left:359px;top:96px;width:60px;height:36px;background:#fff"></div><div class="t" style="left:362px;top:107.5px;color:#262626">MCC</div>
<div class="a" style="left:420px;top:96px;width:140px;height:36px;background:#fff"></div><div class="t" style="left:423px;top:99.5px;line-height:15px;color:#262626">Machinery for<br>Concreting</div>
<div class="a" style="left:561px;top:96px;width:50px;height:36px;background:#edebeb"></div>
<div class="a" style="left:612px;top:96px;width:70px;height:36px;background:#edebeb"></div>
<div class="a" style="left:683px;top:96px;width:40px;height:36px;background:#edebeb"></div>
<div class="a" style="left:724px;top:96px;width:50px;height:36px;background:#edebeb"></div>
<div class="a" style="left:775px;top:96px;width:60px;height:36px;background:#edebeb"></div>
<div class="a" style="left:836px;top:96px;width:50px;height:36px;background:#fff"></div><div class="t" style="left:836px;width:47px;text-align:right;top:107.5px;color:#262626">0.2</div>
<div class="a" style="left:887px;top:96px;width:70px;height:36px;background:#fff"></div><div class="t" style="left:887px;width:67px;text-align:right;top:107.5px;color:#262626">0</div>
<div class="a" style="left:958px;top:96px;width:40px;height:36px;background:#fff"></div><div class="t" style="left:958px;width:37px;text-align:right;top:107.5px;color:#262626">22</div>
<div class="a" style="left:999px;top:96px;width:50px;height:36px;background:#fff"></div><div class="t" style="left:999px;width:47px;text-align:right;top:107.5px;color:#262626">1</div>
<div class="a" style="left:1050px;top:96px;width:60px;height:36px;background:#fff"></div><div class="t" style="left:1050px;width:57px;text-align:right;top:107.5px;color:#262626">4.4</div>
<div class="a" style="left:1111px;top:96px;width:50px;height:36px;background:#edebeb"></div>
<div class="a" style="left:1162px;top:96px;width:70px;height:36px;background:#edebeb"></div>
<div class="a" style="left:1233px;top:96px;width:40px;height:36px;background:#edebeb"></div>
<div class="a" style="left:1274px;top:96px;width:50px;height:36px;background:#edebeb"></div>
<div class="a" style="left:1325px;top:96px;width:60px;height:36px;background:#edebeb"></div>
<div class="a" style="left:1386px;top:96px;width:80px;height:36px;background:#fff"></div><div class="t" style="left:1386px;width:77px;text-align:right;top:107.5px;color:#262626">4.4</div>
<div class="a" style="left:1467px;top:96px;width:60px;height:36px;background:#fff"></div><div class="t" style="left:1467px;width:57px;text-align:right;top:107.5px;color:#262626">10</div>
<div class="a" style="left:1528px;top:96px;width:60px;height:36px;background:#fff"></div><div class="t" style="left:1528px;width:57px;text-align:right;top:107.5px;color:#262626">0.44</div>
<div class="a" style="left:1589px;top:96px;width:80px;height:36px;background:#fff"></div><div class="t" style="left:1589px;width:77px;text-align:right;top:107.5px;color:#262626">4.84</div>
<div class="a" style="left:1670px;top:96px;width:60px;height:36px;background:#fff"></div>
<div class="a" style="left:1731px;top:96px;width:60px;height:36px;background:#fff"></div>
<div class="a" style="left:1792px;top:96px;width:50px;height:36px;background:#fff"></div>
<div class="a" style="left:1843px;top:96px;width:60px;height:36px;background:#fff"></div>
<div class="a" style="left:189px;top:133px;width:17px;height:23px;background:#edf0f5"></div>
<div class="t" style="left:189px;top:139px;width:18px;text-align:center">6</div>
<div class="a" style="left:207px;top:133px;width:40px;height:23px;background:#fff"></div>
<div class="a" style="left:248px;top:133px;width:110px;height:23px;background:#fff"></div>
<div class="a" style="left:359px;top:133px;width:60px;height:23px;background:#fff"></div><div class="t" style="left:362px;top:138px;color:#262626;font-weight:bold;letter-spacing:-0.12px">C30C</div>
<div class="a" style="left:420px;top:133px;width:140px;height:23px;background:#fff"></div><div class="t" style="left:423px;top:138px;color:#262626;font-weight:bold;letter-spacing:-0.12px">Concrete Grade 30</div>
<div class="a" style="left:561px;top:133px;width:50px;height:23px;background:#fff"></div>
<div class="a" style="left:612px;top:133px;width:70px;height:23px;background:#fff"></div>
<div class="a" style="left:683px;top:133px;width:40px;height:23px;background:#fff"></div>
<div class="a" style="left:724px;top:133px;width:50px;height:23px;background:#fff"></div>
<div class="a" style="left:775px;top:133px;width:60px;height:23px;background:#fff"></div>
<div class="a" style="left:836px;top:133px;width:50px;height:23px;background:#fff"></div>
<div class="a" style="left:887px;top:133px;width:70px;height:23px;background:#fff"></div>
<div class="a" style="left:958px;top:133px;width:40px;height:23px;background:#fff"></div>
<div class="a" style="left:999px;top:133px;width:50px;height:23px;background:#fff"></div>
<div class="a" style="left:1050px;top:133px;width:60px;height:23px;background:#fff"></div>
<div class="a" style="left:1111px;top:133px;width:50px;height:23px;background:#fff"></div>
<div class="a" style="left:1162px;top:133px;width:70px;height:23px;background:#fff"></div>
<div class="a" style="left:1233px;top:133px;width:40px;height:23px;background:#fff"></div>
<div class="a" style="left:1274px;top:133px;width:50px;height:23px;background:#fff"></div>
<div class="a" style="left:1325px;top:133px;width:60px;height:23px;background:#fff"></div>
<div class="a" style="left:1386px;top:133px;width:80px;height:23px;background:#fff"></div>
<div class="a" style="left:1467px;top:133px;width:60px;height:23px;background:#fff"></div>
<div class="a" style="left:1528px;top:133px;width:60px;height:23px;background:#fff"></div>
<div class="a" style="left:1589px;top:133px;width:80px;height:23px;background:#fff"></div><div class="t" style="left:1589px;width:77px;text-align:right;top:138px;color:#262626;font-weight:bold;letter-spacing:-0.12px">239.327</div>
<div class="a" style="left:1670px;top:133px;width:60px;height:23px;background:#fff"></div>
<div class="a" style="left:1731px;top:133px;width:60px;height:23px;background:#fff"></div>
<div class="a" style="left:1792px;top:133px;width:50px;height:23px;background:#fff"></div>
<div class="a" style="left:1843px;top:133px;width:60px;height:23px;background:#fff"></div>
<div class="a" style="left:189px;top:157px;width:17px;height:23px;background:#edf0f5"></div>
<div class="t" style="left:189px;top:163px;width:18px;text-align:center">7</div>
<div class="a" style="left:207px;top:157px;width:40px;height:23px;background:#eafbe0"></div>
<div class="a" style="left:248px;top:157px;width:110px;height:23px;background:#eafbe0"></div>
<div class="a" style="left:359px;top:157px;width:60px;height:23px;background:#eafbe0"></div><div class="t" style="left:362px;top:162px;color:#262626">C30</div>
<div class="a" style="left:420px;top:157px;width:140px;height:23px;background:#eafbe0"></div><div class="t" style="left:423px;top:162px;color:#262626">Concrete Grade 30</div>
<div class="a" style="left:561px;top:157px;width:50px;height:23px;background:#edebeb"></div>
<div class="a" style="left:612px;top:157px;width:70px;height:23px;background:#edebeb"></div>
<div class="a" style="left:683px;top:157px;width:40px;height:23px;background:#edebeb"></div>
<div class="a" style="left:724px;top:157px;width:50px;height:23px;background:#edebeb"></div>
<div class="a" style="left:775px;top:157px;width:60px;height:23px;background:#edebeb"></div>
<div class="a" style="left:836px;top:157px;width:50px;height:23px;background:#edebeb"></div>
<div class="a" style="left:887px;top:157px;width:70px;height:23px;background:#edebeb"></div>
<div class="a" style="left:958px;top:157px;width:40px;height:23px;background:#edebeb"></div>
<div class="a" style="left:999px;top:157px;width:50px;height:23px;background:#edebeb"></div>
<div class="a" style="left:1050px;top:157px;width:60px;height:23px;background:#edebeb"></div>
<div class="a" style="left:1111px;top:157px;width:50px;height:23px;background:#edebeb"></div>
<div class="a" style="left:1162px;top:157px;width:70px;height:23px;background:#edebeb"></div>
<div class="a" style="left:1233px;top:157px;width:40px;height:23px;background:#edebeb"></div>
<div class="a" style="left:1274px;top:157px;width:50px;height:23px;background:#edebeb"></div>
<div class="a" style="left:1325px;top:157px;width:60px;height:23px;background:#edebeb"></div>
<div class="a" style="left:1386px;top:157px;width:80px;height:23px;background:#eafbe0"></div><div class="t" style="left:1386px;width:77px;text-align:right;top:162px;color:#262626">165.27</div>
<div class="a" style="left:1467px;top:157px;width:60px;height:23px;background:#eafbe0"></div><div class="t" style="left:1467px;width:57px;text-align:right;top:162px;color:#262626">10</div>
<div class="a" style="left:1528px;top:157px;width:60px;height:23px;background:#eafbe0"></div><div class="t" style="left:1528px;width:57px;text-align:right;top:162px;color:#262626">16.527</div>
<div class="a" style="left:1589px;top:157px;width:80px;height:23px;background:#eafbe0"></div><div class="t" style="left:1589px;width:77px;text-align:right;top:162px;color:#262626">181.797</div>
<div class="a" style="left:1670px;top:157px;width:60px;height:23px;background:#eafbe0"></div>
<div class="a" style="left:1731px;top:157px;width:60px;height:23px;background:#eafbe0"></div>
<div class="a" style="left:1792px;top:157px;width:50px;height:23px;background:#eafbe0"></div><div class="t" style="left:1795px;top:162px;color:#262626">MY</div>
<div class="a" style="left:1843px;top:157px;width:60px;height:23px;background:#eafbe0"></div>
<div class="a" style="left:189px;top:181px;width:17px;height:23px;background:#edf0f5"></div>
<div class="t" style="left:189px;top:187px;width:18px;text-align:center">8</div>
<div class="a" style="left:207px;top:181px;width:40px;height:23px;background:#fff"></div>
<div class="a" style="left:248px;top:181px;width:110px;height:23px;background:#fff"></div>
<div class="a" style="left:359px;top:181px;width:60px;height:23px;background:#fff"></div><div class="t" style="left:362px;top:186px;color:#262626">SLC</div>
<div class="a" style="left:420px;top:181px;width:140px;height:23px;background:#fff"></div><div class="t" style="left:423px;top:186px;color:#262626">Sub Labor Concretor</div>
<div class="a" style="left:561px;top:181px;width:50px;height:23px;background:#fff"></div><div class="t" style="left:561px;width:47px;text-align:right;top:186px;color:#262626">1</div>
<div class="a" style="left:612px;top:181px;width:70px;height:23px;background:#fff"></div><div class="t" style="left:612px;width:67px;text-align:right;top:186px;color:#262626">0</div>
<div class="a" style="left:683px;top:181px;width:40px;height:23px;background:#fff"></div><div class="t" style="left:683px;width:37px;text-align:right;top:186px;color:#262626">24</div>
<div class="a" style="left:724px;top:181px;width:50px;height:23px;background:#fff"></div><div class="t" style="left:724px;width:47px;text-align:right;top:186px;color:#262626">1</div>
<div class="a" style="left:775px;top:181px;width:60px;height:23px;background:#fff"></div><div class="t" style="left:775px;width:57px;text-align:right;top:186px;color:#262626">24</div>
<div class="a" style="left:836px;top:181px;width:50px;height:23px;background:#edebeb"></div>
<div class="a" style="left:887px;top:181px;width:70px;height:23px;background:#edebeb"></div>
<div class="a" style="left:958px;top:181px;width:40px;height:23px;background:#edebeb"></div>
<div class="a" style="left:999px;top:181px;width:50px;height:23px;background:#edebeb"></div>
<div class="a" style="left:1050px;top:181px;width:60px;height:23px;background:#edebeb"></div>
<div class="a" style="left:1111px;top:181px;width:50px;height:23px;background:#edebeb"></div>
<div class="a" style="left:1162px;top:181px;width:70px;height:23px;background:#edebeb"></div>
<div class="a" style="left:1233px;top:181px;width:40px;height:23px;background:#edebeb"></div>
<div class="a" style="left:1274px;top:181px;width:50px;height:23px;background:#edebeb"></div>
<div class="a" style="left:1325px;top:181px;width:60px;height:23px;background:#edebeb"></div>
<div class="a" style="left:1386px;top:181px;width:80px;height:23px;background:#fff"></div><div class="t" style="left:1386px;width:77px;text-align:right;top:186px;color:#262626">24</div>
<div class="a" style="left:1467px;top:181px;width:60px;height:23px;background:#fff"></div><div class="t" style="left:1467px;width:57px;text-align:right;top:186px;color:#262626">10</div>
<div class="a" style="left:1528px;top:181px;width:60px;height:23px;background:#fff"></div><div class="t" style="left:1528px;width:57px;text-align:right;top:186px;color:#262626">2.4</div>
<div class="a" style="left:1589px;top:181px;width:80px;height:23px;background:#fff"></div><div class="t" style="left:1589px;width:77px;text-align:right;top:186px;color:#262626">26.4</div>
<div class="a" style="left:1670px;top:181px;width:60px;height:23px;background:#fff"></div>
<div class="a" style="left:1731px;top:181px;width:60px;height:23px;background:#fff"></div>
<div class="a" style="left:1792px;top:181px;width:50px;height:23px;background:#fff"></div>
<div class="a" style="left:1843px;top:181px;width:60px;height:23px;background:#fff"></div>
<div class="a" style="left:189px;top:205px;width:17px;height:23px;background:#edf0f5"></div>
<div class="t" style="left:189px;top:211px;width:18px;text-align:center">9</div>
<div class="a" style="left:207px;top:205px;width:40px;height:23px;background:#fff"></div>
<div class="a" style="left:248px;top:205px;width:110px;height:23px;background:#fff"></div>
<div class="a" style="left:359px;top:205px;width:60px;height:23px;background:#fff"></div><div class="t" style="left:362px;top:210px;color:#262626">PC</div>
<div class="a" style="left:420px;top:205px;width:140px;height:23px;background:#fff"></div><div class="t" style="left:423px;top:210px;color:#262626">Pumping Charge</div>
<div class="a" style="left:561px;top:205px;width:50px;height:23px;background:#edebeb"></div>
<div class="a" style="left:612px;top:205px;width:70px;height:23px;background:#edebeb"></div>
<div class="a" style="left:683px;top:205px;width:40px;height:23px;background:#edebeb"></div>
<div class="a" style="left:724px;top:205px;width:50px;height:23px;background:#edebeb"></div>
<div class="a" style="left:775px;top:205px;width:60px;height:23px;background:#edebeb"></div>
<div class="a" style="left:836px;top:205px;width:50px;height:23px;background:#fff"></div><div class="t" style="left:836px;width:47px;text-align:right;top:210px;color:#262626">1</div>
<div class="a" style="left:887px;top:205px;width:70px;height:23px;background:#fff"></div><div class="t" style="left:887px;width:67px;text-align:right;top:210px;color:#262626">5</div>
<div class="a" style="left:958px;top:205px;width:40px;height:23px;background:#fff"></div><div class="t" style="left:958px;width:37px;text-align:right;top:210px;color:#262626">6</div>
<div class="a" style="left:999px;top:205px;width:50px;height:23px;background:#fff"></div><div class="t" style="left:999px;width:47px;text-align:right;top:210px;color:#262626">1</div>
<div class="a" style="left:1050px;top:205px;width:60px;height:23px;background:#fff"></div><div class="t" style="left:1050px;width:57px;text-align:right;top:210px;color:#262626">6.3</div>
<div class="a" style="left:1111px;top:205px;width:50px;height:23px;background:#edebeb"></div>
<div class="a" style="left:1162px;top:205px;width:70px;height:23px;background:#edebeb"></div>
<div class="a" style="left:1233px;top:205px;width:40px;height:23px;background:#edebeb"></div>
<div class="a" style="left:1274px;top:205px;width:50px;height:23px;background:#edebeb"></div>
<div class="a" style="left:1325px;top:205px;width:60px;height:23px;background:#edebeb"></div>
<div class="a" style="left:1386px;top:205px;width:80px;height:23px;background:#fff"></div><div class="t" style="left:1386px;width:77px;text-align:right;top:210px;color:#262626">6.3</div>
<div class="a" style="left:1467px;top:205px;width:60px;height:23px;background:#fff"></div><div class="t" style="left:1467px;width:57px;text-align:right;top:210px;color:#262626">10</div>
<div class="a" style="left:1528px;top:205px;width:60px;height:23px;background:#fff"></div><div class="t" style="left:1528px;width:57px;text-align:right;top:210px;color:#262626">0.63</div>
<div class="a" style="left:1589px;top:205px;width:80px;height:23px;background:#fff"></div><div class="t" style="left:1589px;width:77px;text-align:right;top:210px;color:#262626">6.93</div>
<div class="a" style="left:1670px;top:205px;width:60px;height:23px;background:#fff"></div>
<div class="a" style="left:1731px;top:205px;width:60px;height:23px;background:#fff"></div>
<div class="a" style="left:1792px;top:205px;width:50px;height:23px;background:#fff"></div>
<div class="a" style="left:1843px;top:205px;width:60px;height:23px;background:#fff"></div>
<div class="a" style="left:189px;top:229px;width:17px;height:36px;background:#edf0f5"></div>
<div class="t" style="left:189px;top:241.5px;width:18px;text-align:center">10</div>
<div class="a" style="left:207px;top:229px;width:40px;height:36px;background:#fff"></div>
<div class="a" style="left:248px;top:229px;width:110px;height:36px;background:#fff"></div>
<div class="a" style="left:359px;top:229px;width:60px;height:36px;background:#fff"></div><div class="t" style="left:362px;top:240.5px;color:#262626">MCC</div>
<div class="a" style="left:420px;top:229px;width:140px;height:36px;background:#fff"></div><div class="t" style="left:423px;top:232.5px;line-height:15px;color:#262626">Machinery for<br>Concreting</div>
<div class="a" style="left:561px;top:229px;width:50px;height:36px;background:#edebeb"></div>
<div class="a" style="left:612px;top:229px;width:70px;height:36px;background:#edebeb"></div>
<div class="a" style="left:683px;top:229px;width:40px;height:36px;background:#edebeb"></div>
<div class="a" style="left:724px;top:229px;width:50px;height:36px;background:#edebeb"></div>
<div class="a" style="left:775px;top:229px;width:60px;height:36px;background:#edebeb"></div>
<div class="a" style="left:836px;top:229px;width:50px;height:36px;background:#fff"></div><div class="t" style="left:836px;width:47px;text-align:right;top:240.5px;color:#262626">1</div>
<div class="a" style="left:887px;top:229px;width:70px;height:36px;background:#fff"></div><div class="t" style="left:887px;width:67px;text-align:right;top:240.5px;color:#262626">0</div>
<div class="a" style="left:958px;top:229px;width:40px;height:36px;background:#fff"></div><div class="t" style="left:958px;width:37px;text-align:right;top:240.5px;color:#262626">22</div>
<div class="a" style="left:999px;top:229px;width:50px;height:36px;background:#fff"></div><div class="t" style="left:999px;width:47px;text-align:right;top:240.5px;color:#262626">1</div>
<div class="a" style="left:1050px;top:229px;width:60px;height:36px;background:#fff"></div><div class="t" style="left:1050px;width:57px;text-align:right;top:240.5px;color:#262626">22</div>
<div class="a" style="left:1111px;top:229px;width:50px;height:36px;background:#edebeb"></div>
<div class="a" style="left:1162px;top:229px;width:70px;height:36px;background:#edebeb"></div>
<div class="a" style="left:1233px;top:229px;width:40px;height:36px;background:#edebeb"></div>
<div class="a" style="left:1274px;top:229px;width:50px;height:36px;background:#edebeb"></div>
<div class="a" style="left:1325px;top:229px;width:60px;height:36px;background:#edebeb"></div>
<div class="a" style="left:1386px;top:229px;width:80px;height:36px;background:#fff"></div><div class="t" style="left:1386px;width:77px;text-align:right;top:240.5px;color:#262626">22</div>
<div class="a" style="left:1467px;top:229px;width:60px;height:36px;background:#fff"></div><div class="t" style="left:1467px;width:57px;text-align:right;top:240.5px;color:#262626">10</div>
<div class="a" style="left:1528px;top:229px;width:60px;height:36px;background:#fff"></div><div class="t" style="left:1528px;width:57px;text-align:right;top:240.5px;color:#262626">2.2</div>
<div class="a" style="left:1589px;top:229px;width:80px;height:36px;background:#fff"></div><div class="t" style="left:1589px;width:77px;text-align:right;top:240.5px;color:#262626">24.2</div>
<div class="a" style="left:1670px;top:229px;width:60px;height:36px;background:#fff"></div>
<div class="a" style="left:1731px;top:229px;width:60px;height:36px;background:#fff"></div>
<div class="a" style="left:1792px;top:229px;width:50px;height:36px;background:#fff"></div>
<div class="a" style="left:1843px;top:229px;width:60px;height:36px;background:#fff"></div>
<div class="a" style="left:189px;top:266px;width:17px;height:23px;background:#edf0f5"></div>
<div class="t" style="left:189px;top:272px;width:18px;text-align:center">11</div>
<div class="a" style="left:207px;top:266px;width:40px;height:23px;background:#fff"></div>
<div class="a" style="left:248px;top:266px;width:110px;height:23px;background:#fff"></div>
<div class="a" style="left:359px;top:266px;width:60px;height:23px;background:#fff"></div><div class="t" style="left:362px;top:271px;color:#262626;font-weight:bold;letter-spacing:-0.12px">C35C</div>
<div class="a" style="left:420px;top:266px;width:140px;height:23px;background:#fff"></div><div class="t" style="left:423px;top:271px;color:#262626;font-weight:bold;letter-spacing:-0.12px">Concrete Grade 35</div>
<div class="a" style="left:561px;top:266px;width:50px;height:23px;background:#fff"></div>
<div class="a" style="left:612px;top:266px;width:70px;height:23px;background:#fff"></div>
<div class="a" style="left:683px;top:266px;width:40px;height:23px;background:#fff"></div>
<div class="a" style="left:724px;top:266px;width:50px;height:23px;background:#fff"></div>
<div class="a" style="left:775px;top:266px;width:60px;height:23px;background:#fff"></div>
<div class="a" style="left:836px;top:266px;width:50px;height:23px;background:#fff"></div>
<div class="a" style="left:887px;top:266px;width:70px;height:23px;background:#fff"></div>
<div class="a" style="left:958px;top:266px;width:40px;height:23px;background:#fff"></div>
<div class="a" style="left:999px;top:266px;width:50px;height:23px;background:#fff"></div>
<div class="a" style="left:1050px;top:266px;width:60px;height:23px;background:#fff"></div>
<div class="a" style="left:1111px;top:266px;width:50px;height:23px;background:#fff"></div>
<div class="a" style="left:1162px;top:266px;width:70px;height:23px;background:#fff"></div>
<div class="a" style="left:1233px;top:266px;width:40px;height:23px;background:#fff"></div>
<div class="a" style="left:1274px;top:266px;width:50px;height:23px;background:#fff"></div>
<div class="a" style="left:1325px;top:266px;width:60px;height:23px;background:#fff"></div>
<div class="a" style="left:1386px;top:266px;width:80px;height:23px;background:#fff"></div>
<div class="a" style="left:1467px;top:266px;width:60px;height:23px;background:#fff"></div>
<div class="a" style="left:1528px;top:266px;width:60px;height:23px;background:#fff"></div>
<div class="a" style="left:1589px;top:266px;width:80px;height:23px;background:#fff"></div><div class="t" style="left:1589px;width:77px;text-align:right;top:271px;color:#262626;font-weight:bold;letter-spacing:-0.12px">250.877</div>
<div class="a" style="left:1670px;top:266px;width:60px;height:23px;background:#fff"></div>
<div class="a" style="left:1731px;top:266px;width:60px;height:23px;background:#fff"></div>
<div class="a" style="left:1792px;top:266px;width:50px;height:23px;background:#fff"></div>
<div class="a" style="left:1843px;top:266px;width:60px;height:23px;background:#fff"></div>
<div class="a" style="left:189px;top:290px;width:17px;height:23px;background:#edf0f5"></div>
<div class="t" style="left:189px;top:296px;width:18px;text-align:center">12</div>
<div class="a" style="left:207px;top:290px;width:40px;height:23px;background:#fff"></div>
<div class="a" style="left:248px;top:290px;width:110px;height:23px;background:#fff"></div>
<div class="a" style="left:359px;top:290px;width:60px;height:23px;background:#fff"></div><div class="t" style="left:362px;top:295px;color:#262626">PC</div>
<div class="a" style="left:420px;top:290px;width:140px;height:23px;background:#fff"></div><div class="t" style="left:423px;top:295px;color:#262626">Pumping Charge</div>
<div class="a" style="left:561px;top:290px;width:50px;height:23px;background:#edebeb"></div>
<div class="a" style="left:612px;top:290px;width:70px;height:23px;background:#edebeb"></div>
<div class="a" style="left:683px;top:290px;width:40px;height:23px;background:#edebeb"></div>
<div class="a" style="left:724px;top:290px;width:50px;height:23px;background:#edebeb"></div>
<div class="a" style="left:775px;top:290px;width:60px;height:23px;background:#edebeb"></div>
<div class="a" style="left:836px;top:290px;width:50px;height:23px;background:#fff"></div><div class="t" style="left:836px;width:47px;text-align:right;top:295px;color:#262626">1</div>
<div class="a" style="left:887px;top:290px;width:70px;height:23px;background:#fff"></div><div class="t" style="left:887px;width:67px;text-align:right;top:295px;color:#262626">5</div>
<div class="a" style="left:958px;top:290px;width:40px;height:23px;background:#fff"></div><div class="t" style="left:958px;width:37px;text-align:right;top:295px;color:#262626">6</div>
<div class="a" style="left:999px;top:290px;width:50px;height:23px;background:#fff"></div><div class="t" style="left:999px;width:47px;text-align:right;top:295px;color:#262626">1</div>
<div class="a" style="left:1050px;top:290px;width:60px;height:23px;background:#fff"></div><div class="t" style="left:1050px;width:57px;text-align:right;top:295px;color:#262626">6.3</div>
<div class="a" style="left:1111px;top:290px;width:50px;height:23px;background:#edebeb"></div>
<div class="a" style="left:1162px;top:290px;width:70px;height:23px;background:#edebeb"></div>
<div class="a" style="left:1233px;top:290px;width:40px;height:23px;background:#edebeb"></div>
<div class="a" style="left:1274px;top:290px;width:50px;height:23px;background:#edebeb"></div>
<div class="a" style="left:1325px;top:290px;width:60px;height:23px;background:#edebeb"></div>
<div class="a" style="left:1386px;top:290px;width:80px;height:23px;background:#fff"></div><div class="t" style="left:1386px;width:77px;text-align:right;top:295px;color:#262626">6.3</div>
<div class="a" style="left:1467px;top:290px;width:60px;height:23px;background:#fff"></div><div class="t" style="left:1467px;width:57px;text-align:right;top:295px;color:#262626">10</div>
<div class="a" style="left:1528px;top:290px;width:60px;height:23px;background:#fff"></div><div class="t" style="left:1528px;width:57px;text-align:right;top:295px;color:#262626">0.63</div>
<div class="a" style="left:1589px;top:290px;width:80px;height:23px;background:#fff"></div><div class="t" style="left:1589px;width:77px;text-align:right;top:295px;color:#262626">6.93</div>
<div class="a" style="left:1670px;top:290px;width:60px;height:23px;background:#fff"></div>
<div class="a" style="left:1731px;top:290px;width:60px;height:23px;background:#fff"></div>
<div class="a" style="left:1792px;top:290px;width:50px;height:23px;background:#fff"></div>
<div class="a" style="left:1843px;top:290px;width:60px;height:23px;background:#fff"></div>
<div class="a" style="left:189px;top:314px;width:17px;height:36px;background:#edf0f5"></div>
<div class="t" style="left:189px;top:326.5px;width:18px;text-align:center">13</div>
<div class="a" style="left:207px;top:314px;width:40px;height:36px;background:#fff"></div>
<div class="a" style="left:248px;top:314px;width:110px;height:36px;background:#fff"></div>
<div class="a" style="left:359px;top:314px;width:60px;height:36px;background:#fff"></div><div class="t" style="left:362px;top:325.5px;color:#262626">MCC</div>
<div class="a" style="left:420px;top:314px;width:140px;height:36px;background:#fff"></div><div class="t" style="left:423px;top:317.5px;line-height:15px;color:#262626">Machinery for<br>Concreting</div>
<div class="a" style="left:561px;top:314px;width:50px;height:36px;background:#edebeb"></div>
<div class="a" style="left:612px;top:314px;width:70px;height:36px;background:#edebeb"></div>
<div class="a" style="left:683px;top:314px;width:40px;height:36px;background:#edebeb"></div>
<div class="a" style="left:724px;top:314px;width:50px;height:36px;background:#edebeb"></div>
<div class="a" style="left:775px;top:314px;width:60px;height:36px;background:#edebeb"></div>
<div class="a" style="left:836px;top:314px;width:50px;height:36px;background:#fff"></div><div class="t" style="left:836px;width:47px;text-align:right;top:325.5px;color:#262626">1</div>
<div class="a" style="left:887px;top:314px;width:70px;height:36px;background:#fff"></div><div class="t" style="left:887px;width:67px;text-align:right;top:325.5px;color:#262626">0</div>
<div class="a" style="left:958px;top:314px;width:40px;height:36px;background:#fff"></div><div class="t" style="left:958px;width:37px;text-align:right;top:325.5px;color:#262626">22</div>
<div class="a" style="left:999px;top:314px;width:50px;height:36px;background:#fff"></div><div class="t" style="left:999px;width:47px;text-align:right;top:325.5px;color:#262626">1</div>
<div class="a" style="left:1050px;top:314px;width:60px;height:36px;background:#fff"></div><div class="t" style="left:1050px;width:57px;text-align:right;top:325.5px;color:#262626">22</div>
<div class="a" style="left:1111px;top:314px;width:50px;height:36px;background:#edebeb"></div>
<div class="a" style="left:1162px;top:314px;width:70px;height:36px;background:#edebeb"></div>
<div class="a" style="left:1233px;top:314px;width:40px;height:36px;background:#edebeb"></div>
<div class="a" style="left:1274px;top:314px;width:50px;height:36px;background:#edebeb"></div>
<div class="a" style="left:1325px;top:314px;width:60px;height:36px;background:#edebeb"></div>
<div class="a" style="left:1386px;top:314px;width:80px;height:36px;background:#fff"></div><div class="t" style="left:1386px;width:77px;text-align:right;top:325.5px;color:#262626">22</div>
<div class="a" style="left:1467px;top:314px;width:60px;height:36px;background:#fff"></div><div class="t" style="left:1467px;width:57px;text-align:right;top:325.5px;color:#262626">10</div>
<div class="a" style="left:1528px;top:314px;width:60px;height:36px;background:#fff"></div><div class="t" style="left:1528px;width:57px;text-align:right;top:325.5px;color:#262626">2.2</div>
<div class="a" style="left:1589px;top:314px;width:80px;height:36px;background:#fff"></div><div class="t" style="left:1589px;width:77px;text-align:right;top:325.5px;color:#262626">24.2</div>
<div class="a" style="left:1670px;top:314px;width:60px;height:36px;background:#fff"></div>
<div class="a" style="left:1731px;top:314px;width:60px;height:36px;background:#fff"></div>
<div class="a" style="left:1792px;top:314px;width:50px;height:36px;background:#fff"></div>
<div class="a" style="left:1843px;top:314px;width:60px;height:36px;background:#fff"></div>
<div class="a" style="left:189px;top:351px;width:17px;height:23px;background:#edf0f5"></div>
<div class="t" style="left:189px;top:357px;width:18px;text-align:center">14</div>
<div class="a" style="left:207px;top:351px;width:40px;height:23px;background:#eafbe0"></div>
<div class="a" style="left:248px;top:351px;width:110px;height:23px;background:#eafbe0"></div>
<div class="a" style="left:359px;top:351px;width:60px;height:23px;background:#eafbe0"></div><div class="t" style="left:362px;top:356px;color:#262626">C35</div>
<div class="a" style="left:420px;top:351px;width:140px;height:23px;background:#eafbe0"></div><div class="t" style="left:423px;top:356px;color:#262626">Concrete Grade 35</div>
<div class="a" style="left:561px;top:351px;width:50px;height:23px;background:#edebeb"></div>
<div class="a" style="left:612px;top:351px;width:70px;height:23px;background:#edebeb"></div>
<div class="a" style="left:683px;top:351px;width:40px;height:23px;background:#edebeb"></div>
<div class="a" style="left:724px;top:351px;width:50px;height:23px;background:#edebeb"></div>
<div class="a" style="left:775px;top:351px;width:60px;height:23px;background:#edebeb"></div>
<div class="a" style="left:836px;top:351px;width:50px;height:23px;background:#edebeb"></div>
<div class="a" style="left:887px;top:351px;width:70px;height:23px;background:#edebeb"></div>
<div class="a" style="left:958px;top:351px;width:40px;height:23px;background:#edebeb"></div>
<div class="a" style="left:999px;top:351px;width:50px;height:23px;background:#edebeb"></div>
<div class="a" style="left:1050px;top:351px;width:60px;height:23px;background:#edebeb"></div>
<div class="a" style="left:1111px;top:351px;width:50px;height:23px;background:#edebeb"></div>
<div class="a" style="left:1162px;top:351px;width:70px;height:23px;background:#edebeb"></div>
<div class="a" style="left:1233px;top:351px;width:40px;height:23px;background:#edebeb"></div>
<div class="a" style="left:1274px;top:351px;width:50px;height:23px;background:#edebeb"></div>
<div class="a" style="left:1325px;top:351px;width:60px;height:23px;background:#edebeb"></div>
<div class="a" style="left:1386px;top:351px;width:80px;height:23px;background:#eafbe0"></div><div class="t" style="left:1386px;width:77px;text-align:right;top:356px;color:#262626">175.77</div>
<div class="a" style="left:1467px;top:351px;width:60px;height:23px;background:#eafbe0"></div><div class="t" style="left:1467px;width:57px;text-align:right;top:356px;color:#262626">10</div>
<div class="a" style="left:1528px;top:351px;width:60px;height:23px;background:#eafbe0"></div><div class="t" style="left:1528px;width:57px;text-align:right;top:356px;color:#262626">17.577</div>
<div class="a" style="left:1589px;top:351px;width:80px;height:23px;background:#eafbe0"></div><div class="t" style="left:1589px;width:77px;text-align:right;top:356px;color:#262626">193.347</div>
<div class="a" style="left:1670px;top:351px;width:60px;height:23px;background:#eafbe0"></div>
<div class="a" style="left:1731px;top:351px;width:60px;height:23px;background:#eafbe0"></div>
<div class="a" style="left:1792px;top:351px;width:50px;height:23px;background:#eafbe0"></div><div class="t" style="left:1795px;top:356px;color:#262626">MY</div>
<div class="a" style="left:1843px;top:351px;width:60px;height:23px;background:#eafbe0"></div>
<div class="a" style="left:189px;top:375px;width:17px;height:23px;background:#edf0f5"></div>
<div class="t" style="left:189px;top:381px;width:18px;text-align:center">15</div>
<div class="a" style="left:207px;top:375px;width:40px;height:23px;background:#fff"></div>
<div class="a" style="left:248px;top:375px;width:110px;height:23px;background:#fff"></div>
<div class="a" style="left:359px;top:375px;width:60px;height:23px;background:#fff"></div><div class="t" style="left:362px;top:380px;color:#262626">SLC</div>
<div class="a" style="left:420px;top:375px;width:140px;height:23px;background:#fff"></div><div class="t" style="left:423px;top:380px;color:#262626">Sub Labor Concretor</div>
<div class="a" style="left:561px;top:375px;width:50px;height:23px;background:#fff"></div><div class="t" style="left:561px;width:47px;text-align:right;top:380px;color:#262626">1</div>
<div class="a" style="left:612px;top:375px;width:70px;height:23px;background:#fff"></div><div class="t" style="left:612px;width:67px;text-align:right;top:380px;color:#262626">0</div>
<div class="a" style="left:683px;top:375px;width:40px;height:23px;background:#fff"></div><div class="t" style="left:683px;width:37px;text-align:right;top:380px;color:#262626">24</div>
<div class="a" style="left:724px;top:375px;width:50px;height:23px;background:#fff"></div><div class="t" style="left:724px;width:47px;text-align:right;top:380px;color:#262626">1</div>
<div class="a" style="left:775px;top:375px;width:60px;height:23px;background:#fff"></div><div class="t" style="left:775px;width:57px;text-align:right;top:380px;color:#262626">24</div>
<div class="a" style="left:836px;top:375px;width:50px;height:23px;background:#edebeb"></div>
<div class="a" style="left:887px;top:375px;width:70px;height:23px;background:#edebeb"></div>
<div class="a" style="left:958px;top:375px;width:40px;height:23px;background:#edebeb"></div>
<div class="a" style="left:999px;top:375px;width:50px;height:23px;background:#edebeb"></div>
<div class="a" style="left:1050px;top:375px;width:60px;height:23px;background:#edebeb"></div>
<div class="a" style="left:1111px;top:375px;width:50px;height:23px;background:#edebeb"></div>
<div class="a" style="left:1162px;top:375px;width:70px;height:23px;background:#edebeb"></div>
<div class="a" style="left:1233px;top:375px;width:40px;height:23px;background:#edebeb"></div>
<div class="a" style="left:1274px;top:375px;width:50px;height:23px;background:#edebeb"></div>
<div class="a" style="left:1325px;top:375px;width:60px;height:23px;background:#edebeb"></div>
<div class="a" style="left:1386px;top:375px;width:80px;height:23px;background:#fff"></div><div class="t" style="left:1386px;width:77px;text-align:right;top:380px;color:#262626">24</div>
<div class="a" style="left:1467px;top:375px;width:60px;height:23px;background:#fff"></div><div class="t" style="left:1467px;width:57px;text-align:right;top:380px;color:#262626">10</div>
<div class="a" style="left:1528px;top:375px;width:60px;height:23px;background:#fff"></div><div class="t" style="left:1528px;width:57px;text-align:right;top:380px;color:#262626">2.4</div>
<div class="a" style="left:1589px;top:375px;width:80px;height:23px;background:#fff"></div><div class="t" style="left:1589px;width:77px;text-align:right;top:380px;color:#262626">26.4</div>
<div class="a" style="left:1670px;top:375px;width:60px;height:23px;background:#fff"></div>
<div class="a" style="left:1731px;top:375px;width:60px;height:23px;background:#fff"></div>
<div class="a" style="left:1792px;top:375px;width:50px;height:23px;background:#fff"></div>
<div class="a" style="left:1843px;top:375px;width:60px;height:23px;background:#fff"></div>
<div class="a" style="left:189px;top:399px;width:17px;height:23px;background:#edf0f5"></div>
<div class="t" style="left:189px;top:405px;width:18px;text-align:center">16</div>
<div class="a" style="left:207px;top:399px;width:40px;height:23px;background:#fff"></div>
<div class="a" style="left:248px;top:399px;width:110px;height:23px;background:#fff"></div>
<div class="a" style="left:359px;top:399px;width:60px;height:23px;background:#fff"></div><div class="t" style="left:362px;top:404px;color:#262626;font-weight:bold;letter-spacing:-0.12px">C40C</div>
<div class="a" style="left:420px;top:399px;width:140px;height:23px;background:#fff"></div><div class="t" style="left:423px;top:404px;color:#262626;font-weight:bold;letter-spacing:-0.12px">Concrete Grade 40</div>
<div class="a" style="left:561px;top:399px;width:50px;height:23px;background:#fff"></div>
<div class="a" style="left:612px;top:399px;width:70px;height:23px;background:#fff"></div>
<div class="a" style="left:683px;top:399px;width:40px;height:23px;background:#fff"></div>
<div class="a" style="left:724px;top:399px;width:50px;height:23px;background:#fff"></div>
<div class="a" style="left:775px;top:399px;width:60px;height:23px;background:#fff"></div>
<div class="a" style="left:836px;top:399px;width:50px;height:23px;background:#fff"></div>
<div class="a" style="left:887px;top:399px;width:70px;height:23px;background:#fff"></div>
<div class="a" style="left:958px;top:399px;width:40px;height:23px;background:#fff"></div>
<div class="a" style="left:999px;top:399px;width:50px;height:23px;background:#fff"></div>
<div class="a" style="left:1050px;top:399px;width:60px;height:23px;background:#fff"></div>
<div class="a" style="left:1111px;top:399px;width:50px;height:23px;background:#fff"></div>
<div class="a" style="left:1162px;top:399px;width:70px;height:23px;background:#fff"></div>
<div class="a" style="left:1233px;top:399px;width:40px;height:23px;background:#fff"></div>
<div class="a" style="left:1274px;top:399px;width:50px;height:23px;background:#fff"></div>
<div class="a" style="left:1325px;top:399px;width:60px;height:23px;background:#fff"></div>
<div class="a" style="left:1386px;top:399px;width:80px;height:23px;background:#fff"></div>
<div class="a" style="left:1467px;top:399px;width:60px;height:23px;background:#fff"></div>
<div class="a" style="left:1528px;top:399px;width:60px;height:23px;background:#fff"></div>
<div class="a" style="left:1589px;top:399px;width:80px;height:23px;background:#fff"></div><div class="t" style="left:1589px;width:77px;text-align:right;top:404px;color:#262626;font-weight:bold;letter-spacing:-0.12px">263.582</div>
<div class="a" style="left:1670px;top:399px;width:60px;height:23px;background:#fff"></div>
<div class="a" style="left:1731px;top:399px;width:60px;height:23px;background:#fff"></div>
<div class="a" style="left:1792px;top:399px;width:50px;height:23px;background:#fff"></div>
<div class="a" style="left:1843px;top:399px;width:60px;height:23px;background:#fff"></div>
<div class="a" style="left:189px;top:423px;width:17px;height:23px;background:#edf0f5"></div>
<div class="t" style="left:189px;top:429px;width:18px;text-align:center">17</div>
<div class="a" style="left:207px;top:423px;width:40px;height:23px;background:#fff"></div>
<div class="a" style="left:248px;top:423px;width:110px;height:23px;background:#fff"></div>
<div class="a" style="left:359px;top:423px;width:60px;height:23px;background:#fff"></div><div class="t" style="left:362px;top:428px;color:#262626">SLC</div>
<div class="a" style="left:420px;top:423px;width:140px;height:23px;background:#fff"></div><div class="t" style="left:423px;top:428px;color:#262626">Sub Labor Concretor</div>
<div class="a" style="left:561px;top:423px;width:50px;height:23px;background:#fff"></div><div class="t" style="left:561px;width:47px;text-align:right;top:428px;color:#262626">1</div>
<div class="a" style="left:612px;top:423px;width:70px;height:23px;background:#fff"></div><div class="t" style="left:612px;width:67px;text-align:right;top:428px;color:#262626">0</div>
<div class="a" style="left:683px;top:423px;width:40px;height:23px;background:#fff"></div><div class="t" style="left:683px;width:37px;text-align:right;top:428px;color:#262626">24</div>
<div class="a" style="left:724px;top:423px;width:50px;height:23px;background:#fff"></div><div class="t" style="left:724px;width:47px;text-align:right;top:428px;color:#262626">1</div>
<div class="a" style="left:775px;top:423px;width:60px;height:23px;background:#fff"></div><div class="t" style="left:775px;width:57px;text-align:right;top:428px;color:#262626">24</div>
<div class="a" style="left:836px;top:423px;width:50px;height:23px;background:#edebeb"></div>
<div class="a" style="left:887px;top:423px;width:70px;height:23px;background:#edebeb"></div>
<div class="a" style="left:958px;top:423px;width:40px;height:23px;background:#edebeb"></div>
<div class="a" style="left:999px;top:423px;width:50px;height:23px;background:#edebeb"></div>
<div class="a" style="left:1050px;top:423px;width:60px;height:23px;background:#edebeb"></div>
<div class="a" style="left:1111px;top:423px;width:50px;height:23px;background:#edebeb"></div>
<div class="a" style="left:1162px;top:423px;width:70px;height:23px;background:#edebeb"></div>
<div class="a" style="left:1233px;top:423px;width:40px;height:23px;background:#edebeb"></div>
<div class="a" style="left:1274px;top:423px;width:50px;height:23px;background:#edebeb"></div>
<div class="a" style="left:1325px;top:423px;width:60px;height:23px;background:#edebeb"></div>
<div class="a" style="left:1386px;top:423px;width:80px;height:23px;background:#fff"></div><div class="t" style="left:1386px;width:77px;text-align:right;top:428px;color:#262626">24</div>
<div class="a" style="left:1467px;top:423px;width:60px;height:23px;background:#fff"></div><div class="t" style="left:1467px;width:57px;text-align:right;top:428px;color:#262626">10</div>
<div class="a" style="left:1528px;top:423px;width:60px;height:23px;background:#fff"></div><div class="t" style="left:1528px;width:57px;text-align:right;top:428px;color:#262626">2.4</div>
<div class="a" style="left:1589px;top:423px;width:80px;height:23px;background:#fff"></div><div class="t" style="left:1589px;width:77px;text-align:right;top:428px;color:#262626">26.4</div>
<div class="a" style="left:1670px;top:423px;width:60px;height:23px;background:#fff"></div>
<div class="a" style="left:1731px;top:423px;width:60px;height:23px;background:#fff"></div>
<div class="a" style="left:1792px;top:423px;width:50px;height:23px;background:#fff"></div>
<div class="a" style="left:1843px;top:423px;width:60px;height:23px;background:#fff"></div>
<div class="a" style="left:189px;top:447px;width:17px;height:23px;background:#edf0f5"></div>
<div class="t" style="left:189px;top:453px;width:18px;text-align:center">18</div>
<div class="a" style="left:207px;top:447px;width:40px;height:23px;background:#eafbe0"></div>
<div class="a" style="left:248px;top:447px;width:110px;height:23px;background:#eafbe0"></div>
<div class="a" style="left:359px;top:447px;width:60px;height:23px;background:#eafbe0"></div><div class="t" style="left:362px;top:452px;color:#262626">C40</div>
<div class="a" style="left:420px;top:447px;width:140px;height:23px;background:#eafbe0"></div><div class="t" style="left:423px;top:452px;color:#262626">Concrete Grade 40</div>
<div class="a" style="left:561px;top:447px;width:50px;height:23px;background:#edebeb"></div>
<div class="a" style="left:612px;top:447px;width:70px;height:23px;background:#edebeb"></div>
<div class="a" style="left:683px;top:447px;width:40px;height:23px;background:#edebeb"></div>
<div class="a" style="left:724px;top:447px;width:50px;height:23px;background:#edebeb"></div>
<div class="a" style="left:775px;top:447px;width:60px;height:23px;background:#edebeb"></div>
<div class="a" style="left:836px;top:447px;width:50px;height:23px;background:#edebeb"></div>
<div class="a" style="left:887px;top:447px;width:70px;height:23px;background:#edebeb"></div>
<div class="a" style="left:958px;top:447px;width:40px;height:23px;background:#edebeb"></div>
<div class="a" style="left:999px;top:447px;width:50px;height:23px;background:#edebeb"></div>
<div class="a" style="left:1050px;top:447px;width:60px;height:23px;background:#edebeb"></div>
<div class="a" style="left:1111px;top:447px;width:50px;height:23px;background:#edebeb"></div>
<div class="a" style="left:1162px;top:447px;width:70px;height:23px;background:#edebeb"></div>
<div class="a" style="left:1233px;top:447px;width:40px;height:23px;background:#edebeb"></div>
<div class="a" style="left:1274px;top:447px;width:50px;height:23px;background:#edebeb"></div>
<div class="a" style="left:1325px;top:447px;width:60px;height:23px;background:#edebeb"></div>
<div class="a" style="left:1386px;top:447px;width:80px;height:23px;background:#eafbe0"></div><div class="t" style="left:1386px;width:77px;text-align:right;top:452px;color:#262626">187.32</div>
<div class="a" style="left:1467px;top:447px;width:60px;height:23px;background:#eafbe0"></div><div class="t" style="left:1467px;width:57px;text-align:right;top:452px;color:#262626">10</div>
<div class="a" style="left:1528px;top:447px;width:60px;height:23px;background:#eafbe0"></div><div class="t" style="left:1528px;width:57px;text-align:right;top:452px;color:#262626">18.732</div>
<div class="a" style="left:1589px;top:447px;width:80px;height:23px;background:#eafbe0"></div><div class="t" style="left:1589px;width:77px;text-align:right;top:452px;color:#262626">206.052</div>
<div class="a" style="left:1670px;top:447px;width:60px;height:23px;background:#eafbe0"></div>
<div class="a" style="left:1731px;top:447px;width:60px;height:23px;background:#eafbe0"></div>
<div class="a" style="left:1792px;top:447px;width:50px;height:23px;background:#eafbe0"></div><div class="t" style="left:1795px;top:452px;color:#262626">MY</div>
<div class="a" style="left:1843px;top:447px;width:60px;height:23px;background:#eafbe0"></div>
<div class="a" style="left:189px;top:471px;width:17px;height:23px;background:#edf0f5"></div>
<div class="t" style="left:189px;top:477px;width:18px;text-align:center">19</div>
<div class="a" style="left:207px;top:471px;width:40px;height:23px;background:#fff"></div>
<div class="a" style="left:248px;top:471px;width:110px;height:23px;background:#fff"></div>
<div class="a" style="left:359px;top:471px;width:60px;height:23px;background:#fff"></div><div class="t" style="left:362px;top:476px;color:#262626">PC</div>
<div class="a" style="left:420px;top:471px;width:140px;height:23px;background:#fff"></div><div class="t" style="left:423px;top:476px;color:#262626">Pumping Charge</div>
<div class="a" style="left:561px;top:471px;width:50px;height:23px;background:#edebeb"></div>
<div class="a" style="left:612px;top:471px;width:70px;height:23px;background:#edebeb"></div>
<div class="a" style="left:683px;top:471px;width:40px;height:23px;background:#edebeb"></div>
<div class="a" style="left:724px;top:471px;width:50px;height:23px;background:#edebeb"></div>
<div class="a" style="left:775px;top:471px;width:60px;height:23px;background:#edebeb"></div>
<div class="a" style="left:836px;top:471px;width:50px;height:23px;background:#fff"></div><div class="t" style="left:836px;width:47px;text-align:right;top:476px;color:#262626">1</div>
<div class="a" style="left:887px;top:471px;width:70px;height:23px;background:#fff"></div><div class="t" style="left:887px;width:67px;text-align:right;top:476px;color:#262626">5</div>
<div class="a" style="left:958px;top:471px;width:40px;height:23px;background:#fff"></div><div class="t" style="left:958px;width:37px;text-align:right;top:476px;color:#262626">6</div>
<div class="a" style="left:999px;top:471px;width:50px;height:23px;background:#fff"></div><div class="t" style="left:999px;width:47px;text-align:right;top:476px;color:#262626">1</div>
<div class="a" style="left:1050px;top:471px;width:60px;height:23px;background:#fff"></div><div class="t" style="left:1050px;width:57px;text-align:right;top:476px;color:#262626">6.3</div>
<div class="a" style="left:1111px;top:471px;width:50px;height:23px;background:#edebeb"></div>
<div class="a" style="left:1162px;top:471px;width:70px;height:23px;background:#edebeb"></div>
<div class="a" style="left:1233px;top:471px;width:40px;height:23px;background:#edebeb"></div>
<div class="a" style="left:1274px;top:471px;width:50px;height:23px;background:#edebeb"></div>
<div class="a" style="left:1325px;top:471px;width:60px;height:23px;background:#edebeb"></div>
<div class="a" style="left:1386px;top:471px;width:80px;height:23px;background:#fff"></div><div class="t" style="left:1386px;width:77px;text-align:right;top:476px;color:#262626">6.3</div>
<div class="a" style="left:1467px;top:471px;width:60px;height:23px;background:#fff"></div><div class="t" style="left:1467px;width:57px;text-align:right;top:476px;color:#262626">10</div>
<div class="a" style="left:1528px;top:471px;width:60px;height:23px;background:#fff"></div><div class="t" style="left:1528px;width:57px;text-align:right;top:476px;color:#262626">0.63</div>
<div class="a" style="left:1589px;top:471px;width:80px;height:23px;background:#fff"></div><div class="t" style="left:1589px;width:77px;text-align:right;top:476px;color:#262626">6.93</div>
<div class="a" style="left:1670px;top:471px;width:60px;height:23px;background:#fff"></div>
<div class="a" style="left:1731px;top:471px;width:60px;height:23px;background:#fff"></div>
<div class="a" style="left:1792px;top:471px;width:50px;height:23px;background:#fff"></div>
<div class="a" style="left:1843px;top:471px;width:60px;height:23px;background:#fff"></div>
<div class="a" style="left:189px;top:495px;width:17px;height:36px;background:#edf0f5"></div>
<div class="t" style="left:189px;top:507.5px;width:18px;text-align:center">20</div>
<div class="a" style="left:207px;top:495px;width:40px;height:36px;background:#fff"></div>
<div class="a" style="left:248px;top:495px;width:110px;height:36px;background:#fff"></div>
<div class="a" style="left:359px;top:495px;width:60px;height:36px;background:#fff"></div><div class="t" style="left:362px;top:506.5px;color:#262626">MCC</div>
<div class="a" style="left:420px;top:495px;width:140px;height:36px;background:#fff"></div><div class="t" style="left:423px;top:498.5px;line-height:15px;color:#262626">Machinery for<br>Concreting</div>
<div class="a" style="left:561px;top:495px;width:50px;height:36px;background:#edebeb"></div>
<div class="a" style="left:612px;top:495px;width:70px;height:36px;background:#edebeb"></div>
<div class="a" style="left:683px;top:495px;width:40px;height:36px;background:#edebeb"></div>
<div class="a" style="left:724px;top:495px;width:50px;height:36px;background:#edebeb"></div>
<div class="a" style="left:775px;top:495px;width:60px;height:36px;background:#edebeb"></div>
<div class="a" style="left:836px;top:495px;width:50px;height:36px;background:#fff"></div><div class="t" style="left:836px;width:47px;text-align:right;top:506.5px;color:#262626">1</div>
<div class="a" style="left:887px;top:495px;width:70px;height:36px;background:#fff"></div><div class="t" style="left:887px;width:67px;text-align:right;top:506.5px;color:#262626">0</div>
<div class="a" style="left:958px;top:495px;width:40px;height:36px;background:#fff"></div><div class="t" style="left:958px;width:37px;text-align:right;top:506.5px;color:#262626">22</div>
<div class="a" style="left:999px;top:495px;width:50px;height:36px;background:#fff"></div><div class="t" style="left:999px;width:47px;text-align:right;top:506.5px;color:#262626">1</div>
<div class="a" style="left:1050px;top:495px;width:60px;height:36px;background:#fff"></div><div class="t" style="left:1050px;width:57px;text-align:right;top:506.5px;color:#262626">22</div>
<div class="a" style="left:1111px;top:495px;width:50px;height:36px;background:#edebeb"></div>
<div class="a" style="left:1162px;top:495px;width:70px;height:36px;background:#edebeb"></div>
<div class="a" style="left:1233px;top:495px;width:40px;height:36px;background:#edebeb"></div>
<div class="a" style="left:1274px;top:495px;width:50px;height:36px;background:#edebeb"></div>
<div class="a" style="left:1325px;top:495px;width:60px;height:36px;background:#edebeb"></div>
<div class="a" style="left:1386px;top:495px;width:80px;height:36px;background:#fff"></div><div class="t" style="left:1386px;width:77px;text-align:right;top:506.5px;color:#262626">22</div>
<div class="a" style="left:1467px;top:495px;width:60px;height:36px;background:#fff"></div><div class="t" style="left:1467px;width:57px;text-align:right;top:506.5px;color:#262626">10</div>
<div class="a" style="left:1528px;top:495px;width:60px;height:36px;background:#fff"></div><div class="t" style="left:1528px;width:57px;text-align:right;top:506.5px;color:#262626">2.2</div>
<div class="a" style="left:1589px;top:495px;width:80px;height:36px;background:#fff"></div><div class="t" style="left:1589px;width:77px;text-align:right;top:506.5px;color:#262626">24.2</div>
<div class="a" style="left:1670px;top:495px;width:60px;height:36px;background:#fff"></div>
<div class="a" style="left:1731px;top:495px;width:60px;height:36px;background:#fff"></div>
<div class="a" style="left:1792px;top:495px;width:50px;height:36px;background:#fff"></div>
<div class="a" style="left:1843px;top:495px;width:60px;height:36px;background:#fff"></div>
<div class="a" style="left:189px;top:532px;width:17px;height:23px;background:#edf0f5"></div>
<div class="t" style="left:189px;top:538px;width:18px;text-align:center">21</div>
<div class="a" style="left:207px;top:532px;width:40px;height:23px;background:#fff"></div>
<div class="a" style="left:248px;top:532px;width:110px;height:23px;background:#fff"></div>
<div class="a" style="left:359px;top:532px;width:60px;height:23px;background:#fff"></div><div class="t" style="left:362px;top:537px;color:#262626;font-weight:bold;letter-spacing:-0.12px">C45C</div>
<div class="a" style="left:420px;top:532px;width:140px;height:23px;background:#fff"></div><div class="t" style="left:423px;top:537px;color:#262626;font-weight:bold;letter-spacing:-0.12px">Concrete Grade 45</div>
<div class="a" style="left:561px;top:532px;width:50px;height:23px;background:#fff"></div>
<div class="a" style="left:612px;top:532px;width:70px;height:23px;background:#fff"></div>
<div class="a" style="left:683px;top:532px;width:40px;height:23px;background:#fff"></div>
<div class="a" style="left:724px;top:532px;width:50px;height:23px;background:#fff"></div>
<div class="a" style="left:775px;top:532px;width:60px;height:23px;background:#fff"></div>
<div class="a" style="left:836px;top:532px;width:50px;height:23px;background:#fff"></div>
<div class="a" style="left:887px;top:532px;width:70px;height:23px;background:#fff"></div>
<div class="a" style="left:958px;top:532px;width:40px;height:23px;background:#fff"></div>
<div class="a" style="left:999px;top:532px;width:50px;height:23px;background:#fff"></div>
<div class="a" style="left:1050px;top:532px;width:60px;height:23px;background:#fff"></div>
<div class="a" style="left:1111px;top:532px;width:50px;height:23px;background:#fff"></div>
<div class="a" style="left:1162px;top:532px;width:70px;height:23px;background:#fff"></div>
<div class="a" style="left:1233px;top:532px;width:40px;height:23px;background:#fff"></div>
<div class="a" style="left:1274px;top:532px;width:50px;height:23px;background:#fff"></div>
<div class="a" style="left:1325px;top:532px;width:60px;height:23px;background:#fff"></div>
<div class="a" style="left:1386px;top:532px;width:80px;height:23px;background:#fff"></div>
<div class="a" style="left:1467px;top:532px;width:60px;height:23px;background:#fff"></div>
<div class="a" style="left:1528px;top:532px;width:60px;height:23px;background:#fff"></div>
<div class="a" style="left:1589px;top:532px;width:80px;height:23px;background:#fff"></div><div class="t" style="left:1589px;width:77px;text-align:right;top:537px;color:#262626;font-weight:bold;letter-spacing:-0.12px">278.597</div>
<div class="a" style="left:1670px;top:532px;width:60px;height:23px;background:#fff"></div>
<div class="a" style="left:1731px;top:532px;width:60px;height:23px;background:#fff"></div>
<div class="a" style="left:1792px;top:532px;width:50px;height:23px;background:#fff"></div>
<div class="a" style="left:1843px;top:532px;width:60px;height:23px;background:#fff"></div>
<div class="a" style="left:189px;top:556px;width:17px;height:23px;background:#edf0f5"></div>
<div class="t" style="left:189px;top:562px;width:18px;text-align:center">22</div>
<div class="a" style="left:207px;top:556px;width:40px;height:23px;background:#eafbe0"></div>
<div class="a" style="left:248px;top:556px;width:110px;height:23px;background:#eafbe0"></div>
<div class="a" style="left:359px;top:556px;width:60px;height:23px;background:#eafbe0"></div><div class="t" style="left:362px;top:561px;color:#262626">C45</div>
<div class="a" style="left:420px;top:556px;width:140px;height:23px;background:#eafbe0"></div><div class="t" style="left:423px;top:561px;color:#262626">Concrete Grade 45</div>
<div class="a" style="left:561px;top:556px;width:50px;height:23px;background:#edebeb"></div>
<div class="a" style="left:612px;top:556px;width:70px;height:23px;background:#edebeb"></div>
<div class="a" style="left:683px;top:556px;width:40px;height:23px;background:#edebeb"></div>
<div class="a" style="left:724px;top:556px;width:50px;height:23px;background:#edebeb"></div>
<div class="a" style="left:775px;top:556px;width:60px;height:23px;background:#edebeb"></div>
<div class="a" style="left:836px;top:556px;width:50px;height:23px;background:#edebeb"></div>
<div class="a" style="left:887px;top:556px;width:70px;height:23px;background:#edebeb"></div>
<div class="a" style="left:958px;top:556px;width:40px;height:23px;background:#edebeb"></div>
<div class="a" style="left:999px;top:556px;width:50px;height:23px;background:#edebeb"></div>
<div class="a" style="left:1050px;top:556px;width:60px;height:23px;background:#edebeb"></div>
<div class="a" style="left:1111px;top:556px;width:50px;height:23px;background:#edebeb"></div>
<div class="a" style="left:1162px;top:556px;width:70px;height:23px;background:#edebeb"></div>
<div class="a" style="left:1233px;top:556px;width:40px;height:23px;background:#edebeb"></div>
<div class="a" style="left:1274px;top:556px;width:50px;height:23px;background:#edebeb"></div>
<div class="a" style="left:1325px;top:556px;width:60px;height:23px;background:#edebeb"></div>
<div class="a" style="left:1386px;top:556px;width:80px;height:23px;background:#eafbe0"></div><div class="t" style="left:1386px;width:77px;text-align:right;top:561px;color:#262626">200.97</div>
<div class="a" style="left:1467px;top:556px;width:60px;height:23px;background:#eafbe0"></div><div class="t" style="left:1467px;width:57px;text-align:right;top:561px;color:#262626">10</div>
<div class="a" style="left:1528px;top:556px;width:60px;height:23px;background:#eafbe0"></div><div class="t" style="left:1528px;width:57px;text-align:right;top:561px;color:#262626">20.097</div>
<div class="a" style="left:1589px;top:556px;width:80px;height:23px;background:#eafbe0"></div><div class="t" style="left:1589px;width:77px;text-align:right;top:561px;color:#262626">221.067</div>
<div class="a" style="left:1670px;top:556px;width:60px;height:23px;background:#eafbe0"></div>
<div class="a" style="left:1731px;top:556px;width:60px;height:23px;background:#eafbe0"></div>
<div class="a" style="left:1792px;top:556px;width:50px;height:23px;background:#eafbe0"></div><div class="t" style="left:1795px;top:561px;color:#262626">MY</div>
<div class="a" style="left:1843px;top:556px;width:60px;height:23px;background:#eafbe0"></div>
<div class="a" style="left:189px;top:580px;width:17px;height:23px;background:#edf0f5"></div>
<div class="t" style="left:189px;top:586px;width:18px;text-align:center">23</div>
<div class="a" style="left:207px;top:580px;width:40px;height:23px;background:#fff"></div>
<div class="a" style="left:248px;top:580px;width:110px;height:23px;background:#fff"></div>
<div class="a" style="left:359px;top:580px;width:60px;height:23px;background:#fff"></div><div class="t" style="left:362px;top:585px;color:#262626">SLC</div>
<div class="a" style="left:420px;top:580px;width:140px;height:23px;background:#fff"></div><div class="t" style="left:423px;top:585px;color:#262626">Sub Labor Concretor</div>
<div class="a" style="left:561px;top:580px;width:50px;height:23px;background:#fff"></div><div class="t" style="left:561px;width:47px;text-align:right;top:585px;color:#262626">1</div>
<div class="a" style="left:612px;top:580px;width:70px;height:23px;background:#fff"></div><div class="t" style="left:612px;width:67px;text-align:right;top:585px;color:#262626">0</div>
<div class="a" style="left:683px;top:580px;width:40px;height:23px;background:#fff"></div><div class="t" style="left:683px;width:37px;text-align:right;top:585px;color:#262626">24</div>
<div class="a" style="left:724px;top:580px;width:50px;height:23px;background:#fff"></div><div class="t" style="left:724px;width:47px;text-align:right;top:585px;color:#262626">1</div>
<div class="a" style="left:775px;top:580px;width:60px;height:23px;background:#fff"></div><div class="t" style="left:775px;width:57px;text-align:right;top:585px;color:#262626">24</div>
<div class="a" style="left:836px;top:580px;width:50px;height:23px;background:#edebeb"></div>
<div class="a" style="left:887px;top:580px;width:70px;height:23px;background:#edebeb"></div>
<div class="a" style="left:958px;top:580px;width:40px;height:23px;background:#edebeb"></div>
<div class="a" style="left:999px;top:580px;width:50px;height:23px;background:#edebeb"></div>
<div class="a" style="left:1050px;top:580px;width:60px;height:23px;background:#edebeb"></div>
<div class="a" style="left:1111px;top:580px;width:50px;height:23px;background:#edebeb"></div>
<div class="a" style="left:1162px;top:580px;width:70px;height:23px;background:#edebeb"></div>
<div class="a" style="left:1233px;top:580px;width:40px;height:23px;background:#edebeb"></div>
<div class="a" style="left:1274px;top:580px;width:50px;height:23px;background:#edebeb"></div>
<div class="a" style="left:1325px;top:580px;width:60px;height:23px;background:#edebeb"></div>
<div class="a" style="left:1386px;top:580px;width:80px;height:23px;background:#fff"></div><div class="t" style="left:1386px;width:77px;text-align:right;top:585px;color:#262626">24</div>
<div class="a" style="left:1467px;top:580px;width:60px;height:23px;background:#fff"></div><div class="t" style="left:1467px;width:57px;text-align:right;top:585px;color:#262626">10</div>
<div class="a" style="left:1528px;top:580px;width:60px;height:23px;background:#fff"></div><div class="t" style="left:1528px;width:57px;text-align:right;top:585px;color:#262626">2.4</div>
<div class="a" style="left:1589px;top:580px;width:80px;height:23px;background:#fff"></div><div class="t" style="left:1589px;width:77px;text-align:right;top:585px;color:#262626">26.4</div>
<div class="a" style="left:1670px;top:580px;width:60px;height:23px;background:#fff"></div>
<div class="a" style="left:1731px;top:580px;width:60px;height:23px;background:#fff"></div>
<div class="a" style="left:1792px;top:580px;width:50px;height:23px;background:#fff"></div>
<div class="a" style="left:1843px;top:580px;width:60px;height:23px;background:#fff"></div>
<div class="a" style="left:189px;top:604px;width:17px;height:23px;background:#edf0f5"></div>
<div class="t" style="left:189px;top:610px;width:18px;text-align:center">24</div>
<div class="a" style="left:207px;top:604px;width:40px;height:23px;background:#fff"></div>
<div class="a" style="left:248px;top:604px;width:110px;height:23px;background:#fff"></div>
<div class="a" style="left:359px;top:604px;width:60px;height:23px;background:#fff"></div><div class="t" style="left:362px;top:609px;color:#262626">PC</div>
<div class="a" style="left:420px;top:604px;width:140px;height:23px;background:#fff"></div><div class="t" style="left:423px;top:609px;color:#262626">Pumping Charge</div>
<div class="a" style="left:561px;top:604px;width:50px;height:23px;background:#edebeb"></div>
<div class="a" style="left:612px;top:604px;width:70px;height:23px;background:#edebeb"></div>
<div class="a" style="left:683px;top:604px;width:40px;height:23px;background:#edebeb"></div>
<div class="a" style="left:724px;top:604px;width:50px;height:23px;background:#edebeb"></div>
<div class="a" style="left:775px;top:604px;width:60px;height:23px;background:#edebeb"></div>
<div class="a" style="left:836px;top:604px;width:50px;height:23px;background:#fff"></div><div class="t" style="left:836px;width:47px;text-align:right;top:609px;color:#262626">1</div>
<div class="a" style="left:887px;top:604px;width:70px;height:23px;background:#fff"></div><div class="t" style="left:887px;width:67px;text-align:right;top:609px;color:#262626">5</div>
<div class="a" style="left:958px;top:604px;width:40px;height:23px;background:#fff"></div><div class="t" style="left:958px;width:37px;text-align:right;top:609px;color:#262626">6</div>
<div class="a" style="left:999px;top:604px;width:50px;height:23px;background:#fff"></div><div class="t" style="left:999px;width:47px;text-align:right;top:609px;color:#262626">1</div>
<div class="a" style="left:1050px;top:604px;width:60px;height:23px;background:#fff"></div><div class="t" style="left:1050px;width:57px;text-align:right;top:609px;color:#262626">6.3</div>
<div class="a" style="left:1111px;top:604px;width:50px;height:23px;background:#edebeb"></div>
<div class="a" style="left:1162px;top:604px;width:70px;height:23px;background:#edebeb"></div>
<div class="a" style="left:1233px;top:604px;width:40px;height:23px;background:#edebeb"></div>
<div class="a" style="left:1274px;top:604px;width:50px;height:23px;background:#edebeb"></div>
<div class="a" style="left:1325px;top:604px;width:60px;height:23px;background:#edebeb"></div>
<div class="a" style="left:1386px;top:604px;width:80px;height:23px;background:#fff"></div><div class="t" style="left:1386px;width:77px;text-align:right;top:609px;color:#262626">6.3</div>
<div class="a" style="left:1467px;top:604px;width:60px;height:23px;background:#fff"></div><div class="t" style="left:1467px;width:57px;text-align:right;top:609px;color:#262626">10</div>
<div class="a" style="left:1528px;top:604px;width:60px;height:23px;background:#fff"></div><div class="t" style="left:1528px;width:57px;text-align:right;top:609px;color:#262626">0.63</div>
<div class="a" style="left:1589px;top:604px;width:80px;height:23px;background:#fff"></div><div class="t" style="left:1589px;width:77px;text-align:right;top:609px;color:#262626">6.93</div>
<div class="a" style="left:1670px;top:604px;width:60px;height:23px;background:#fff"></div>
<div class="a" style="left:1731px;top:604px;width:60px;height:23px;background:#fff"></div>
<div class="a" style="left:1792px;top:604px;width:50px;height:23px;background:#fff"></div>
<div class="a" style="left:1843px;top:604px;width:60px;height:23px;background:#fff"></div>
<div class="a" style="left:189px;top:628px;width:17px;height:36px;background:#edf0f5"></div>
<div class="t" style="left:189px;top:640.5px;width:18px;text-align:center">25</div>
<div class="a" style="left:207px;top:628px;width:40px;height:36px;background:#fff"></div>
<div class="a" style="left:248px;top:628px;width:110px;height:36px;background:#fff"></div>
<div class="a" style="left:359px;top:628px;width:60px;height:36px;background:#fff"></div><div class="t" style="left:362px;top:639.5px;color:#262626">MCC</div>
<div class="a" style="left:420px;top:628px;width:140px;height:36px;background:#fff"></div><div class="t" style="left:423px;top:631.5px;line-height:15px;color:#262626">Machinery for<br>Concreting</div>
<div class="a" style="left:561px;top:628px;width:50px;height:36px;background:#edebeb"></div>
<div class="a" style="left:612px;top:628px;width:70px;height:36px;background:#edebeb"></div>
<div class="a" style="left:683px;top:628px;width:40px;height:36px;background:#edebeb"></div>
<div class="a" style="left:724px;top:628px;width:50px;height:36px;background:#edebeb"></div>
<div class="a" style="left:775px;top:628px;width:60px;height:36px;background:#edebeb"></div>
<div class="a" style="left:836px;top:628px;width:50px;height:36px;background:#fff"></div><div class="t" style="left:836px;width:47px;text-align:right;top:639.5px;color:#262626">1</div>
<div class="a" style="left:887px;top:628px;width:70px;height:36px;background:#fff"></div><div class="t" style="left:887px;width:67px;text-align:right;top:639.5px;color:#262626">0</div>
<div class="a" style="left:958px;top:628px;width:40px;height:36px;background:#fff"></div><div class="t" style="left:958px;width:37px;text-align:right;top:639.5px;color:#262626">22</div>
<div class="a" style="left:999px;top:628px;width:50px;height:36px;background:#fff"></div><div class="t" style="left:999px;width:47px;text-align:right;top:639.5px;color:#262626">1</div>
<div class="a" style="left:1050px;top:628px;width:60px;height:36px;background:#fff"></div><div class="t" style="left:1050px;width:57px;text-align:right;top:639.5px;color:#262626">22</div>
<div class="a" style="left:1111px;top:628px;width:50px;height:36px;background:#edebeb"></div>
<div class="a" style="left:1162px;top:628px;width:70px;height:36px;background:#edebeb"></div>
<div class="a" style="left:1233px;top:628px;width:40px;height:36px;background:#edebeb"></div>
<div class="a" style="left:1274px;top:628px;width:50px;height:36px;background:#edebeb"></div>
<div class="a" style="left:1325px;top:628px;width:60px;height:36px;background:#edebeb"></div>
<div class="a" style="left:1386px;top:628px;width:80px;height:36px;background:#fff"></div><div class="t" style="left:1386px;width:77px;text-align:right;top:639.5px;color:#262626">22</div>
<div class="a" style="left:1467px;top:628px;width:60px;height:36px;background:#fff"></div><div class="t" style="left:1467px;width:57px;text-align:right;top:639.5px;color:#262626">10</div>
<div class="a" style="left:1528px;top:628px;width:60px;height:36px;background:#fff"></div><div class="t" style="left:1528px;width:57px;text-align:right;top:639.5px;color:#262626">2.2</div>
<div class="a" style="left:1589px;top:628px;width:80px;height:36px;background:#fff"></div><div class="t" style="left:1589px;width:77px;text-align:right;top:639.5px;color:#262626">24.2</div>
<div class="a" style="left:1670px;top:628px;width:60px;height:36px;background:#fff"></div>
<div class="a" style="left:1731px;top:628px;width:60px;height:36px;background:#fff"></div>
<div class="a" style="left:1792px;top:628px;width:50px;height:36px;background:#fff"></div>
<div class="a" style="left:1843px;top:628px;width:60px;height:36px;background:#fff"></div>
<div class="a" style="left:189px;top:665px;width:17px;height:23px;background:#edf0f5"></div>
<div class="t" style="left:189px;top:671px;width:18px;text-align:center">26</div>
<div class="a" style="left:207px;top:665px;width:40px;height:23px;background:#fff"></div>
<div class="a" style="left:248px;top:665px;width:110px;height:23px;background:#fff"></div>
<div class="a" style="left:359px;top:665px;width:60px;height:23px;background:#fff"></div><div class="t" style="left:362px;top:670px;color:#262626;font-weight:bold;letter-spacing:-0.12px">C50C</div>
<div class="a" style="left:420px;top:665px;width:140px;height:23px;background:#fff"></div><div class="t" style="left:423px;top:670px;color:#262626;font-weight:bold;letter-spacing:-0.12px">Concrete Grade 50</div>
<div class="a" style="left:561px;top:665px;width:50px;height:23px;background:#fff"></div>
<div class="a" style="left:612px;top:665px;width:70px;height:23px;background:#fff"></div>
<div class="a" style="left:683px;top:665px;width:40px;height:23px;background:#fff"></div>
<div class="a" style="left:724px;top:665px;width:50px;height:23px;background:#fff"></div>
<div class="a" style="left:775px;top:665px;width:60px;height:23px;background:#fff"></div>
<div class="a" style="left:836px;top:665px;width:50px;height:23px;background:#fff"></div>
<div class="a" style="left:887px;top:665px;width:70px;height:23px;background:#fff"></div>
<div class="a" style="left:958px;top:665px;width:40px;height:23px;background:#fff"></div>
<div class="a" style="left:999px;top:665px;width:50px;height:23px;background:#fff"></div>
<div class="a" style="left:1050px;top:665px;width:60px;height:23px;background:#fff"></div>
<div class="a" style="left:1111px;top:665px;width:50px;height:23px;background:#fff"></div>
<div class="a" style="left:1162px;top:665px;width:70px;height:23px;background:#fff"></div>
<div class="a" style="left:1233px;top:665px;width:40px;height:23px;background:#fff"></div>
<div class="a" style="left:1274px;top:665px;width:50px;height:23px;background:#fff"></div>
<div class="a" style="left:1325px;top:665px;width:60px;height:23px;background:#fff"></div>
<div class="a" style="left:1386px;top:665px;width:80px;height:23px;background:#fff"></div>
<div class="a" style="left:1467px;top:665px;width:60px;height:23px;background:#fff"></div>
<div class="a" style="left:1528px;top:665px;width:60px;height:23px;background:#fff"></div>
<div class="a" style="left:1589px;top:665px;width:80px;height:23px;background:#fff"></div><div class="t" style="left:1589px;width:77px;text-align:right;top:670px;color:#262626;font-weight:bold;letter-spacing:-0.12px">293.612</div>
<div class="a" style="left:1670px;top:665px;width:60px;height:23px;background:#fff"></div>
<div class="a" style="left:1731px;top:665px;width:60px;height:23px;background:#fff"></div>
<div class="a" style="left:1792px;top:665px;width:50px;height:23px;background:#fff"></div>
<div class="a" style="left:1843px;top:665px;width:60px;height:23px;background:#fff"></div>
<div class="a" style="left:189px;top:689px;width:17px;height:23px;background:#edf0f5"></div>
<div class="t" style="left:189px;top:695px;width:18px;text-align:center">27</div>
<div class="a" style="left:207px;top:689px;width:40px;height:23px;background:#eafbe0"></div>
<div class="a" style="left:248px;top:689px;width:110px;height:23px;background:#eafbe0"></div>
<div class="a" style="left:359px;top:689px;width:60px;height:23px;background:#eafbe0"></div><div class="t" style="left:362px;top:694px;color:#262626">C50</div>
<div class="a" style="left:420px;top:689px;width:140px;height:23px;background:#eafbe0"></div><div class="t" style="left:423px;top:694px;color:#262626">Concrete Grade 50</div>
<div class="a" style="left:561px;top:689px;width:50px;height:23px;background:#edebeb"></div>
<div class="a" style="left:612px;top:689px;width:70px;height:23px;background:#edebeb"></div>
<div class="a" style="left:683px;top:689px;width:40px;height:23px;background:#edebeb"></div>
<div class="a" style="left:724px;top:689px;width:50px;height:23px;background:#edebeb"></div>
<div class="a" style="left:775px;top:689px;width:60px;height:23px;background:#edebeb"></div>
<div class="a" style="left:836px;top:689px;width:50px;height:23px;background:#edebeb"></div>
<div class="a" style="left:887px;top:689px;width:70px;height:23px;background:#edebeb"></div>
<div class="a" style="left:958px;top:689px;width:40px;height:23px;background:#edebeb"></div>
<div class="a" style="left:999px;top:689px;width:50px;height:23px;background:#edebeb"></div>
<div class="a" style="left:1050px;top:689px;width:60px;height:23px;background:#edebeb"></div>
<div class="a" style="left:1111px;top:689px;width:50px;height:23px;background:#edebeb"></div>
<div class="a" style="left:1162px;top:689px;width:70px;height:23px;background:#edebeb"></div>
<div class="a" style="left:1233px;top:689px;width:40px;height:23px;background:#edebeb"></div>
<div class="a" style="left:1274px;top:689px;width:50px;height:23px;background:#edebeb"></div>
<div class="a" style="left:1325px;top:689px;width:60px;height:23px;background:#edebeb"></div>
<div class="a" style="left:1386px;top:689px;width:80px;height:23px;background:#eafbe0"></div><div class="t" style="left:1386px;width:77px;text-align:right;top:694px;color:#262626">214.62</div>
<div class="a" style="left:1467px;top:689px;width:60px;height:23px;background:#eafbe0"></div><div class="t" style="left:1467px;width:57px;text-align:right;top:694px;color:#262626">10</div>
<div class="a" style="left:1528px;top:689px;width:60px;height:23px;background:#eafbe0"></div><div class="t" style="left:1528px;width:57px;text-align:right;top:694px;color:#262626">21.462</div>
<div class="a" style="left:1589px;top:689px;width:80px;height:23px;background:#eafbe0"></div><div class="t" style="left:1589px;width:77px;text-align:right;top:694px;color:#262626">236.082</div>
<div class="a" style="left:1670px;top:689px;width:60px;height:23px;background:#eafbe0"></div>
<div class="a" style="left:1731px;top:689px;width:60px;height:23px;background:#eafbe0"></div>
<div class="a" style="left:1792px;top:689px;width:50px;height:23px;background:#eafbe0"></div><div class="t" style="left:1795px;top:694px;color:#262626">MY</div>
<div class="a" style="left:1843px;top:689px;width:60px;height:23px;background:#eafbe0"></div>
<div class="a" style="left:189px;top:713px;width:17px;height:23px;background:#edf0f5"></div>
<div class="t" style="left:189px;top:719px;width:18px;text-align:center">28</div>
<div class="a" style="left:207px;top:713px;width:40px;height:23px;background:#fff"></div>
<div class="a" style="left:248px;top:713px;width:110px;height:23px;background:#fff"></div>
<div class="a" style="left:359px;top:713px;width:60px;height:23px;background:#fff"></div><div class="t" style="left:362px;top:718px;color:#262626">SLC</div>
<div class="a" style="left:420px;top:713px;width:140px;height:23px;background:#fff"></div><div class="t" style="left:423px;top:718px;color:#262626">Sub Labor Concretor</div>
<div class="a" style="left:561px;top:713px;width:50px;height:23px;background:#fff"></div><div class="t" style="left:561px;width:47px;text-align:right;top:718px;color:#262626">1</div>
<div class="a" style="left:612px;top:713px;width:70px;height:23px;background:#fff"></div><div class="t" style="left:612px;width:67px;text-align:right;top:718px;color:#262626">0</div>
<div class="a" style="left:683px;top:713px;width:40px;height:23px;background:#fff"></div><div class="t" style="left:683px;width:37px;text-align:right;top:718px;color:#262626">24</div>
<div class="a" style="left:724px;top:713px;width:50px;height:23px;background:#fff"></div><div class="t" style="left:724px;width:47px;text-align:right;top:718px;color:#262626">1</div>
<div class="a" style="left:775px;top:713px;width:60px;height:23px;background:#fff"></div><div class="t" style="left:775px;width:57px;text-align:right;top:718px;color:#262626">24</div>
<div class="a" style="left:836px;top:713px;width:50px;height:23px;background:#edebeb"></div>
<div class="a" style="left:887px;top:713px;width:70px;height:23px;background:#edebeb"></div>
<div class="a" style="left:958px;top:713px;width:40px;height:23px;background:#edebeb"></div>
<div class="a" style="left:999px;top:713px;width:50px;height:23px;background:#edebeb"></div>
<div class="a" style="left:1050px;top:713px;width:60px;height:23px;background:#edebeb"></div>
<div class="a" style="left:1111px;top:713px;width:50px;height:23px;background:#edebeb"></div>
<div class="a" style="left:1162px;top:713px;width:70px;height:23px;background:#edebeb"></div>
<div class="a" style="left:1233px;top:713px;width:40px;height:23px;background:#edebeb"></div>
<div class="a" style="left:1274px;top:713px;width:50px;height:23px;background:#edebeb"></div>
<div class="a" style="left:1325px;top:713px;width:60px;height:23px;background:#edebeb"></div>
<div class="a" style="left:1386px;top:713px;width:80px;height:23px;background:#fff"></div><div class="t" style="left:1386px;width:77px;text-align:right;top:718px;color:#262626">24</div>
<div class="a" style="left:1467px;top:713px;width:60px;height:23px;background:#fff"></div><div class="t" style="left:1467px;width:57px;text-align:right;top:718px;color:#262626">10</div>
<div class="a" style="left:1528px;top:713px;width:60px;height:23px;background:#fff"></div><div class="t" style="left:1528px;width:57px;text-align:right;top:718px;color:#262626">2.4</div>
<div class="a" style="left:1589px;top:713px;width:80px;height:23px;background:#fff"></div><div class="t" style="left:1589px;width:77px;text-align:right;top:718px;color:#262626">26.4</div>
<div class="a" style="left:1670px;top:713px;width:60px;height:23px;background:#fff"></div>
<div class="a" style="left:1731px;top:713px;width:60px;height:23px;background:#fff"></div>
<div class="a" style="left:1792px;top:713px;width:50px;height:23px;background:#fff"></div>
<div class="a" style="left:1843px;top:713px;width:60px;height:23px;background:#fff"></div>
<div class="a" style="left:189px;top:737px;width:17px;height:23px;background:#edf0f5"></div>
<div class="t" style="left:189px;top:743px;width:18px;text-align:center">29</div>
<div class="a" style="left:207px;top:737px;width:40px;height:23px;background:#fff"></div>
<div class="a" style="left:248px;top:737px;width:110px;height:23px;background:#fff"></div>
<div class="a" style="left:359px;top:737px;width:60px;height:23px;background:#fff"></div><div class="t" style="left:362px;top:742px;color:#262626">PC</div>
<div class="a" style="left:420px;top:737px;width:140px;height:23px;background:#fff"></div><div class="t" style="left:423px;top:742px;color:#262626">Pumping Charge</div>
<div class="a" style="left:561px;top:737px;width:50px;height:23px;background:#edebeb"></div>
<div class="a" style="left:612px;top:737px;width:70px;height:23px;background:#edebeb"></div>
<div class="a" style="left:683px;top:737px;width:40px;height:23px;background:#edebeb"></div>
<div class="a" style="left:724px;top:737px;width:50px;height:23px;background:#edebeb"></div>
<div class="a" style="left:775px;top:737px;width:60px;height:23px;background:#edebeb"></div>
<div class="a" style="left:836px;top:737px;width:50px;height:23px;background:#fff"></div><div class="t" style="left:836px;width:47px;text-align:right;top:742px;color:#262626">1</div>
<div class="a" style="left:887px;top:737px;width:70px;height:23px;background:#fff"></div><div class="t" style="left:887px;width:67px;text-align:right;top:742px;color:#262626">5</div>
<div class="a" style="left:958px;top:737px;width:40px;height:23px;background:#fff"></div><div class="t" style="left:958px;width:37px;text-align:right;top:742px;color:#262626">6</div>
<div class="a" style="left:999px;top:737px;width:50px;height:23px;background:#fff"></div><div class="t" style="left:999px;width:47px;text-align:right;top:742px;color:#262626">1</div>
<div class="a" style="left:1050px;top:737px;width:60px;height:23px;background:#fff"></div><div class="t" style="left:1050px;width:57px;text-align:right;top:742px;color:#262626">6.3</div>
<div class="a" style="left:1111px;top:737px;width:50px;height:23px;background:#edebeb"></div>
<div class="a" style="left:1162px;top:737px;width:70px;height:23px;background:#edebeb"></div>
<div class="a" style="left:1233px;top:737px;width:40px;height:23px;background:#edebeb"></div>
<div class="a" style="left:1274px;top:737px;width:50px;height:23px;background:#edebeb"></div>
<div class="a" style="left:1325px;top:737px;width:60px;height:23px;background:#edebeb"></div>
<div class="a" style="left:1386px;top:737px;width:80px;height:23px;background:#fff"></div><div class="t" style="left:1386px;width:77px;text-align:right;top:742px;color:#262626">6.3</div>
<div class="a" style="left:1467px;top:737px;width:60px;height:23px;background:#fff"></div><div class="t" style="left:1467px;width:57px;text-align:right;top:742px;color:#262626">10</div>
<div class="a" style="left:1528px;top:737px;width:60px;height:23px;background:#fff"></div><div class="t" style="left:1528px;width:57px;text-align:right;top:742px;color:#262626">0.63</div>
<div class="a" style="left:1589px;top:737px;width:80px;height:23px;background:#fff"></div><div class="t" style="left:1589px;width:77px;text-align:right;top:742px;color:#262626">6.93</div>
<div class="a" style="left:1670px;top:737px;width:60px;height:23px;background:#fff"></div>
<div class="a" style="left:1731px;top:737px;width:60px;height:23px;background:#fff"></div>
<div class="a" style="left:1792px;top:737px;width:50px;height:23px;background:#fff"></div>
<div class="a" style="left:1843px;top:737px;width:60px;height:23px;background:#fff"></div>
<div class="a" style="left:189px;top:23px;width:1714px;height:1px;background:#d9d9d9"></div>
<div class="a" style="left:189px;top:47px;width:1714px;height:1px;background:#d9d9d9"></div>
<div class="a" style="left:189px;top:71px;width:1714px;height:1px;background:#d9d9d9"></div>
<div class="a" style="left:189px;top:95px;width:1714px;height:1px;background:#d9d9d9"></div>
<div class="a" style="left:189px;top:132px;width:1714px;height:1px;background:#d9d9d9"></div>
<div class="a" style="left:189px;top:156px;width:1714px;height:1px;background:#d9d9d9"></div>
<div class="a" style="left:189px;top:180px;width:1714px;height:1px;background:#d9d9d9"></div>
<div class="a" style="left:189px;top:204px;width:1714px;height:1px;background:#d9d9d9"></div>
<div class="a" style="left:189px;top:228px;width:1714px;height:1px;background:#d9d9d9"></div>
<div class="a" style="left:189px;top:265px;width:1714px;height:1px;background:#d9d9d9"></div>
<div class="a" style="left:189px;top:289px;width:1714px;height:1px;background:#d9d9d9"></div>
<div class="a" style="left:189px;top:313px;width:1714px;height:1px;background:#d9d9d9"></div>
<div class="a" style="left:189px;top:350px;width:1714px;height:1px;background:#d9d9d9"></div>
<div class="a" style="left:189px;top:374px;width:1714px;height:1px;background:#d9d9d9"></div>
<div class="a" style="left:189px;top:398px;width:1714px;height:1px;background:#d9d9d9"></div>
<div class="a" style="left:189px;top:422px;width:1714px;height:1px;background:#d9d9d9"></div>
<div class="a" style="left:189px;top:446px;width:1714px;height:1px;background:#d9d9d9"></div>
<div class="a" style="left:189px;top:470px;width:1714px;height:1px;background:#d9d9d9"></div>
<div class="a" style="left:189px;top:494px;width:1714px;height:1px;background:#d9d9d9"></div>
<div class="a" style="left:189px;top:531px;width:1714px;height:1px;background:#d9d9d9"></div>
<div class="a" style="left:189px;top:555px;width:1714px;height:1px;background:#d9d9d9"></div>
<div class="a" style="left:189px;top:579px;width:1714px;height:1px;background:#d9d9d9"></div>
<div class="a" style="left:189px;top:603px;width:1714px;height:1px;background:#d9d9d9"></div>
<div class="a" style="left:189px;top:627px;width:1714px;height:1px;background:#d9d9d9"></div>
<div class="a" style="left:189px;top:664px;width:1714px;height:1px;background:#d9d9d9"></div>
<div class="a" style="left:189px;top:688px;width:1714px;height:1px;background:#d9d9d9"></div>
<div class="a" style="left:189px;top:712px;width:1714px;height:1px;background:#d9d9d9"></div>
<div class="a" style="left:189px;top:736px;width:1714px;height:1px;background:#d9d9d9"></div>
<div class="a" style="left:189px;top:760px;width:1714px;height:1px;background:#d9d9d9"></div>
<div class="a" style="left:206px;top:0;width:1px;height:757px;background:#d9d9d9"></div>
<div class="a" style="left:247px;top:0;width:1px;height:757px;background:#d9d9d9"></div>
<div class="a" style="left:358px;top:0;width:1px;height:757px;background:#d9d9d9"></div>
<div class="a" style="left:419px;top:0;width:1px;height:757px;background:#d9d9d9"></div>
<div class="a" style="left:560px;top:0;width:1px;height:757px;background:#9f9f9f"></div>
<div class="a" style="left:611px;top:0;width:1px;height:757px;background:#d9d9d9"></div>
<div class="a" style="left:682px;top:0;width:1px;height:757px;background:#d9d9d9"></div>
<div class="a" style="left:723px;top:0;width:1px;height:757px;background:#d9d9d9"></div>
<div class="a" style="left:774px;top:0;width:1px;height:757px;background:#d9d9d9"></div>
<div class="a" style="left:835px;top:0;width:1px;height:757px;background:#d9d9d9"></div>
<div class="a" style="left:886px;top:0;width:1px;height:757px;background:#d9d9d9"></div>
<div class="a" style="left:957px;top:0;width:1px;height:757px;background:#d9d9d9"></div>
<div class="a" style="left:998px;top:0;width:1px;height:757px;background:#d9d9d9"></div>
<div class="a" style="left:1049px;top:0;width:1px;height:757px;background:#d9d9d9"></div>
<div class="a" style="left:1110px;top:0;width:1px;height:757px;background:#d9d9d9"></div>
<div class="a" style="left:1161px;top:0;width:1px;height:757px;background:#d9d9d9"></div>
<div class="a" style="left:1232px;top:0;width:1px;height:757px;background:#d9d9d9"></div>
<div class="a" style="left:1273px;top:0;width:1px;height:757px;background:#d9d9d9"></div>
<div class="a" style="left:1324px;top:0;width:1px;height:757px;background:#d9d9d9"></div>
<div class="a" style="left:1385px;top:0;width:1px;height:757px;background:#d9d9d9"></div>
<div class="a" style="left:1466px;top:0;width:1px;height:757px;background:#d9d9d9"></div>
<div class="a" style="left:1527px;top:0;width:1px;height:757px;background:#d9d9d9"></div>
<div class="a" style="left:1588px;top:0;width:1px;height:757px;background:#d9d9d9"></div>
<div class="a" style="left:1669px;top:0;width:1px;height:757px;background:#d9d9d9"></div>
<div class="a" style="left:1730px;top:0;width:1px;height:757px;background:#d9d9d9"></div>
<div class="a" style="left:1791px;top:0;width:1px;height:757px;background:#d9d9d9"></div>
<div class="a" style="left:1842px;top:0;width:1px;height:757px;background:#d9d9d9"></div>
<div class="a" style="left:1903px;top:0;width:1px;height:757px;background:#d9d9d9"></div>
<svg style="left:0;top:0" width="400" height="800"><g fill="none"><path d="M256.5 18 V114.5" stroke="#c3c3c3" stroke-width="1"/><path d="M257 35.5 H273" stroke="#c3c3c3" stroke-width="1"/><path d="M257 59.5 H273" stroke="#c3c3c3" stroke-width="1"/><path d="M257 83.5 H273" stroke="#c3c3c3" stroke-width="1"/><path d="M257 114.5 H273" stroke="#c3c3c3" stroke-width="1"/><rect x="250.5" y="5.5" width="12" height="12" rx="2" fill="#fff" stroke="#777"/><path d="M253.5 11.5 H259.5" stroke="#333" stroke-width="1"/><path d="M256.5 151 V247.5" stroke="#c3c3c3" stroke-width="1"/><path d="M257 168.5 H273" stroke="#c3c3c3" stroke-width="1"/><path d="M257 192.5 H273" stroke="#c3c3c3" stroke-width="1"/><path d="M257 216.5 H273" stroke="#c3c3c3" stroke-width="1"/><path d="M257 247.5 H273" stroke="#c3c3c3" stroke-width="1"/><rect x="250.5" y="138.5" width="12" height="12" rx="2" fill="#fff" stroke="#777"/><path d="M253.5 144.5 H259.5" stroke="#333" stroke-width="1"/><path d="M256.5 284 V387" stroke="#c3c3c3" stroke-width="1"/><path d="M257 301.5 H273" stroke="#c3c3c3" stroke-width="1"/><path d="M257 332.5 H273" stroke="#c3c3c3" stroke-width="1"/><path d="M257 362.5 H273" stroke="#c3c3c3" stroke-width="1"/><path d="M257 386.5 H273" stroke="#c3c3c3" stroke-width="1"/><rect x="250.5" y="271.5" width="12" height="12" rx="2" fill="#fff" stroke="#777"/><path d="M253.5 277.5 H259.5" stroke="#333" stroke-width="1"/><path d="M256.5 417 V513.5" stroke="#c3c3c3" stroke-width="1"/><path d="M257 434.5 H273" stroke="#c3c3c3" stroke-width="1"/><path d="M257 458.5 H273" stroke="#c3c3c3" stroke-width="1"/><path d="M257 482.5 H273" stroke="#c3c3c3" stroke-width="1"/><path d="M257 513.5 H273" stroke="#c3c3c3" stroke-width="1"/><rect x="250.5" y="404.5" width="12" height="12" rx="2" fill="#fff" stroke="#777"/><path d="M253.5 410.5 H259.5" stroke="#333" stroke-width="1"/><path d="M256.5 550 V646.5" stroke="#c3c3c3" stroke-width="1"/><path d="M257 567.5 H273" stroke="#c3c3c3" stroke-width="1"/><path d="M257 591.5 H273" stroke="#c3c3c3" stroke-width="1"/><path d="M257 615.5 H273" stroke="#c3c3c3" stroke-width="1"/><path d="M257 646.5 H273" stroke="#c3c3c3" stroke-width="1"/><rect x="250.5" y="537.5" width="12" height="12" rx="2" fill="#fff" stroke="#777"/><path d="M253.5 543.5 H259.5" stroke="#333" stroke-width="1"/><path d="M256.5 683 V760" stroke="#c3c3c3" stroke-width="1"/><path d="M257 700.5 H273" stroke="#c3c3c3" stroke-width="1"/><path d="M257 724.5 H273" stroke="#c3c3c3" stroke-width="1"/><path d="M257 748.5 H273" stroke="#c3c3c3" stroke-width="1"/><rect x="250.5" y="670.5" width="12" height="12" rx="2" fill="#fff" stroke="#777"/><path d="M253.5 676.5 H259.5" stroke="#333" stroke-width="1"/></g><g transform="translate(225.8 10.2) rotate(-45)"><rect x="-3.4" y="-1.7" width="9" height="3.4" fill="#1a9f3f"/><rect x="-2.6" y="-0.8" width="7.6" height="1.6" fill="#2cb552"/><path d="M-4.3 -1.7 L-7.9 0 L-4.3 1.7 Z" fill="#139a36"/></g><g fill="#555"><rect x="225" y="30.2" width="8" height="2.6"/><rect x="225" y="34.3" width="8" height="2.4"/><rect x="225" y="38.2" width="8" height="2.6"/></g><path d="M220.8 30.9 V40.1 M220.8 31.5 H225 M220.8 35.5 H225 M220.8 39.5 H225" stroke="#555" fill="none" stroke-width="1.3"/><g transform="translate(225.8 143.2) rotate(-45)"><rect x="-3.4" y="-1.7" width="9" height="3.4" fill="#1a9f3f"/><rect x="-2.6" y="-0.8" width="7.6" height="1.6" fill="#2cb552"/><path d="M-4.3 -1.7 L-7.9 0 L-4.3 1.7 Z" fill="#139a36"/></g><g fill="#555"><rect x="225" y="163.2" width="8" height="2.6"/><rect x="225" y="167.3" width="8" height="2.4"/><rect x="225" y="171.2" width="8" height="2.6"/></g><path d="M220.8 163.9 V173.1 M220.8 164.5 H225 M220.8 168.5 H225 M220.8 172.5 H225" stroke="#555" fill="none" stroke-width="1.3"/><g transform="translate(225.8 276.2) rotate(-45)"><rect x="-3.4" y="-1.7" width="9" height="3.4" fill="#1a9f3f"/><rect x="-2.6" y="-0.8" width="7.6" height="1.6" fill="#2cb552"/><path d="M-4.3 -1.7 L-7.9 0 L-4.3 1.7 Z" fill="#139a36"/></g><g fill="#555"><rect x="225" y="357.2" width="8" height="2.6"/><rect x="225" y="361.3" width="8" height="2.4"/><rect x="225" y="365.2" width="8" height="2.6"/></g><path d="M220.8 357.9 V367.1 M220.8 358.5 H225 M220.8 362.5 H225 M220.8 366.5 H225" stroke="#555" fill="none" stroke-width="1.3"/><g transform="translate(225.8 409.2) rotate(-45)"><rect x="-3.4" y="-1.7" width="9" height="3.4" fill="#1a9f3f"/><rect x="-2.6" y="-0.8" width="7.6" height="1.6" fill="#2cb552"/><path d="M-4.3 -1.7 L-7.9 0 L-4.3 1.7 Z" fill="#139a36"/></g><g fill="#555"><rect x="225" y="453.2" width="8" height="2.6"/><rect x="225" y="457.3" width="8" height="2.4"/><rect x="225" y="461.2" width="8" height="2.6"/></g><path d="M220.8 453.9 V463.1 M220.8 454.5 H225 M220.8 458.5 H225 M220.8 462.5 H225" stroke="#555" fill="none" stroke-width="1.3"/><g transform="translate(225.8 542.2) rotate(-45)"><rect x="-3.4" y="-1.7" width="9" height="3.4" fill="#1a9f3f"/><rect x="-2.6" y="-0.8" width="7.6" height="1.6" fill="#2cb552"/><path d="M-4.3 -1.7 L-7.9 0 L-4.3 1.7 Z" fill="#139a36"/></g><g fill="#555"><rect x="225" y="562.2" width="8" height="2.6"/><rect x="225" y="566.3" width="8" height="2.4"/><rect x="225" y="570.2" width="8" height="2.6"/></g><path d="M220.8 562.9 V572.1 M220.8 563.5 H225 M220.8 567.5 H225 M220.8 571.5 H225" stroke="#555" fill="none" stroke-width="1.3"/><g transform="translate(225.8 675.2) rotate(-45)"><rect x="-3.4" y="-1.7" width="9" height="3.4" fill="#1a9f3f"/><rect x="-2.6" y="-0.8" width="7.6" height="1.6" fill="#2cb552"/><path d="M-4.3 -1.7 L-7.9 0 L-4.3 1.7 Z" fill="#139a36"/></g><g fill="#555"><rect x="225" y="695.2" width="8" height="2.6"/><rect x="225" y="699.3" width="8" height="2.4"/><rect x="225" y="703.2" width="8" height="2.6"/></g><path d="M220.8 695.9 V705.1 M220.8 696.5 H225 M220.8 700.5 H225 M220.8 704.5 H225" stroke="#555" fill="none" stroke-width="1.3"/></svg>
<div class="t" style="left:269px;top:5px;font-weight:bold;letter-spacing:-0.12px">Unit Rate</div>
<div class="t" style="left:279px;top:29px">Raw Material</div>
<div class="t" style="left:279px;top:53px">Labor</div>
<div class="t" style="left:279px;top:77px">Equipment</div>
<div class="t" style="left:279px;top:107.5px">Equipment</div>
<div class="t" style="left:269px;top:138px;font-weight:bold;letter-spacing:-0.12px">Unit Rate</div>
<div class="t" style="left:279px;top:162px">Raw Material</div>
<div class="t" style="left:279px;top:186px">Labor</div>
<div class="t" style="left:279px;top:210px">Equipment</div>
<div class="t" style="left:279px;top:240.5px">Equipment</div>
<div class="t" style="left:269px;top:271px;font-weight:bold;letter-spacing:-0.12px">Unit Rate</div>
<div class="t" style="left:279px;top:295px">Equipment</div>
<div class="t" style="left:279px;top:325.5px">Equipment</div>
<div class="t" style="left:279px;top:356px">Raw Material</div>
<div class="t" style="left:279px;top:380px">Labor</div>
<div class="t" style="left:269px;top:404px;font-weight:bold;letter-spacing:-0.12px">Unit Rate</div>
<div class="t" style="left:279px;top:428px">Labor</div>
<div class="t" style="left:279px;top:452px">Raw Material</div>
<div class="t" style="left:279px;top:476px">Equipment</div>
<div class="t" style="left:279px;top:506.5px">Equipment</div>
<div class="t" style="left:269px;top:537px;font-weight:bold;letter-spacing:-0.12px">Unit Rate</div>
<div class="t" style="left:279px;top:561px">Raw Material</div>
<div class="t" style="left:279px;top:585px">Labor</div>
<div class="t" style="left:279px;top:609px">Equipment</div>
<div class="t" style="left:279px;top:639.5px">Equipment</div>
<div class="t" style="left:269px;top:670px;font-weight:bold;letter-spacing:-0.12px">Unit Rate</div>
<div class="t" style="left:279px;top:694px">Raw Material</div>
<div class="t" style="left:279px;top:718px">Labor</div>
<div class="t" style="left:279px;top:742px">Equipment</div>
<div class="a" style="left:206px;top:-1px;width:42px;height:25px;border:2px solid #6b6b6b;border-left:none;border-top:none"></div>
</div>
<div class="a" style="left:189px;top:973px;width:1730px;height:10px;background:#fafafa"></div>
<div class="a" style="left:547px;top:974px;width:1360px;height:8px;border-radius:4px;background:#d0d0d0;border:1px solid #ababab"></div>
<div class="a" style="left:1904px;top:172px;width:15px;height:801px;background:#fff"></div>
<div class="a" style="left:1910px;top:176px;width:8px;height:632px;border-radius:4px;background:#cfcfcf;border:1px solid #b0b0b0"></div>
<div class="a" style="left:1919px;top:149px;width:1px;height:835px;background:#c6c6c6"></div>
<div class="a" style="left:0;top:984px;width:1920px;height:34px;background:#efefef"></div>
<div class="t" style="left:30.5px;top:993px;letter-spacing:-0.15px;font-size:16px;line-height:18px;color:#444">Bill of Quantities</div>
<div class="t" style="left:202px;top:993px;letter-spacing:-0.1px;font-size:16px;line-height:18px;color:#1a6fbf;font-weight:bold">Build-up Unit Rates</div>
<div class="t" style="left:410px;top:993px;letter-spacing:-0.1px;font-size:16px;line-height:18px;color:#444">Report</div>
<div class="a" style="left:0;top:1018px;width:1920px;height:1px;background:#d6d6d6"></div>
<div class="a" style="left:0;top:1019px;width:1920px;height:20px;background:#e5e5e5"></div>
<div class="a" style="left:0;top:1039px;width:1920px;height:1px;background:#1363ad"></div>
<div class="a" style="left:0;top:1040px;width:1920px;height:1px;background:#111"></div>
<div class="t" style="left:11px;top:1024px;letter-spacing:-0.05px;font-size:11px;line-height:13px;color:#333">94786670@qq.com connected</div>
<svg style="left:0;top:0" width="1920" height="1041"><rect x="1735" y="1028" width="10" height="2" fill="#555"/><rect x="1754" y="1028" width="99" height="2" fill="#b4b4b4"/><ellipse cx="1804" cy="1028.7" rx="3" ry="3.6" fill="#646464"/><rect x="1862" y="1028" width="10" height="2" fill="#555"/><rect x="1866" y="1024" width="2" height="10" fill="#555"/><path d="M122.5 799.5 V815.5 L126.5 812 L129 817.5 L131.5 816.5 L129.2 811 L133.8 811 Z" fill="#fff" stroke="#111" stroke-width="1"/></svg>
<div class="t" style="left:1887.5px;top:1024px;letter-spacing:-0.15px;font-size:11px;line-height:13px;color:#333">100%</div>
</body></html>
